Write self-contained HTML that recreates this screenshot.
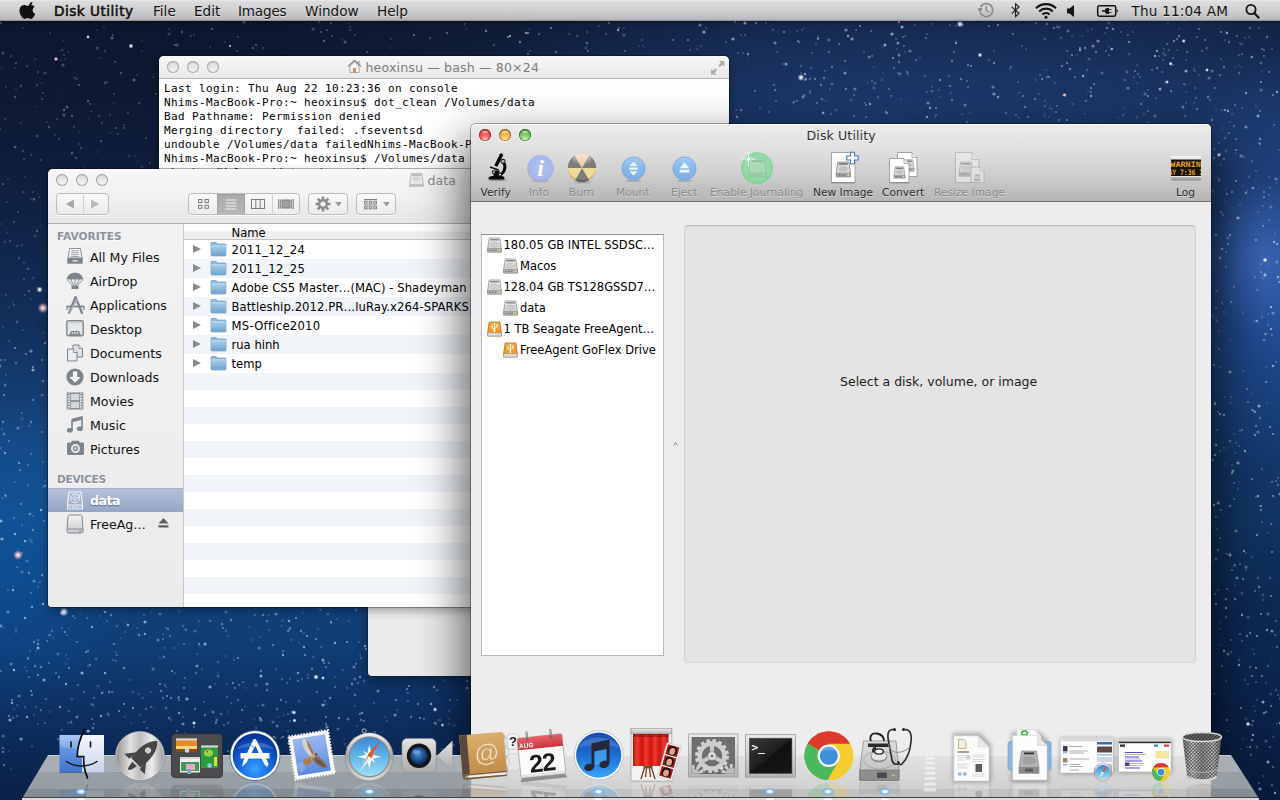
<!DOCTYPE html>
<html lang="en">
<head>
<meta charset="utf-8">
<title>Disk Utility</title>
<style>
*{box-sizing:border-box;margin:0;padding:0}
html,body{width:1280px;height:800px;overflow:hidden;background:#10264f}
body{position:relative;font-family:"DejaVu Sans","Liberation Sans",sans-serif;font-size:12px;color:#000;-webkit-font-smoothing:antialiased}
.abs{position:absolute}
.t{position:absolute;white-space:nowrap;line-height:1}
#bg{position:absolute;left:0;top:0;width:1280px;height:800px;
 background:
  radial-gradient(ellipse 140px 150px at 0px 565px, rgba(6,88,168,.5), rgba(6,88,168,0) 100%),
  radial-gradient(ellipse 60px 80px at 1262px 258px, rgba(90,140,230,.42), rgba(90,140,230,0) 100%),
  radial-gradient(ellipse 150px 260px at 1290px 300px, rgba(45,95,185,.65), rgba(45,95,185,0) 100%),
  radial-gradient(ellipse 700px 260px at 1150px 130px, rgba(34,70,130,.55), rgba(34,70,130,0) 100%),
  radial-gradient(ellipse 520px 110px at 860px 125px, rgba(38,84,156,.42), rgba(38,84,156,0) 100%),
  radial-gradient(ellipse 520px 110px at 760px 50px, rgba(30,60,112,.3), rgba(30,60,112,0) 100%),
  linear-gradient(180deg,#0c152b 0px,#0f1d3b 170px,#12305c 330px,#164a86 450px,#174f8c 520px,#12417a 600px,#0f3d74 650px,#0e3266 700px,#0b2752 760px,#0a2148 800px);
}
/* ---------- menu bar ---------- */
#menubar{position:absolute;left:0;top:0;width:1280px;height:21px;
 background:linear-gradient(180deg,rgba(240,240,240,.97) 0,rgba(228,228,228,.96) 1.500px,rgba(216,216,216,.95) 50%,rgba(196,196,196,.94) 92%,rgba(140,140,140,.95) 100%);
 box-shadow:0 1px 3px rgba(0,0,0,.45);font-size:13.6px;color:#111;z-index:50}
#menubar .t{top:4px;line-height:14px;text-shadow:0 1px 0 rgba(255,255,255,.5)}
/* ---------- generic window ---------- */
.win{position:absolute;border-radius:5px 5px 4px 4px}
.tl{position:absolute;width:12px;height:12px;border-radius:50%}
.tl.off{background:linear-gradient(180deg,#dcdcdc 0,#f4f4f4 100%);box-shadow:inset 0 0 0 1px #a9a9a9,inset 0 1px 2px rgba(0,0,0,.18)}
.tl.r{background:radial-gradient(circle at 50% 88%,#ffc4c4 0,#fb5e5c 38%,#ee403e 62%,#a0242a 100%);box-shadow:inset 0 0 0 .7px rgba(110,20,30,.75),0 1px 0 rgba(255,255,255,.55)}
.tl.y{background:radial-gradient(circle at 50% 88%,#ffeca6 0,#f9b854 38%,#ef9f38 62%,#a0641a 100%);box-shadow:inset 0 0 0 .7px rgba(120,70,10,.75),0 1px 0 rgba(255,255,255,.55)}
.tl.g{background:radial-gradient(circle at 50% 88%,#d8f2b6 0,#88ce74 38%,#62b456 62%,#2f7236 100%);box-shadow:inset 0 0 0 .7px rgba(30,80,30,.75),0 1px 0 rgba(255,255,255,.55)}
.tl:after{content:"";position:absolute;left:3px;top:1.500px;width:6px;height:3px;border-radius:50%;background:linear-gradient(180deg,rgba(255,255,255,.8),rgba(255,255,255,.05))}
.tl.off:after{display:none}

/* ---------- terminal ---------- */
#term{left:159px;top:56px;width:570px;height:362px;background:#fff;box-shadow:0 0 0 1px rgba(0,0,0,.28),0 4px 10px rgba(0,0,0,.32)}
#term .tb{position:absolute;left:0;top:0;width:570px;height:23px;border-radius:5px 5px 0 0;background:linear-gradient(180deg,#f7f7f7 0,#e9e9e9 100%);border-bottom:1px solid #b4b4b4}
#term pre{position:absolute;left:5px;top:25.500px;font-family:"DejaVu Sans Mono","Liberation Mono",monospace;font-size:11px;line-height:14px;letter-spacing:.378px;color:#000}
/* ---------- grey window behind ---------- */
#hidden{left:368px;top:300px;width:420px;height:376px;background:#ebebeb;box-shadow:0 0 0 1px rgba(0,0,0,.25),0 6px 14px rgba(0,0,0,.35)}
/* ---------- finder ---------- */
#finder{left:48px;top:169px;width:640px;height:438px;background:#fff;box-shadow:0 0 0 1px rgba(0,0,0,.3),0 4px 10px rgba(0,0,0,.32);overflow:hidden}
#finder .tb{position:absolute;left:0;top:0;width:100%;height:55px;background:linear-gradient(180deg,#f8f8f8 0,#f1f1f1 50%,#e6e6e6 100%);border-bottom:1px solid #b1b1b1}
.fbtn{position:absolute;top:24px;height:22px;border:1px solid #bdbdbd;border-radius:4px;background:linear-gradient(180deg,#f9f9f9,#ececec);box-shadow:0 1px 0 rgba(255,255,255,.7)}
#side{position:absolute;left:0;top:55px;width:136px;height:383px;background:linear-gradient(180deg,#f2f2f2,#ebebeb);border-right:1px solid #c9c9c9}
#side .h{position:absolute;left:9px;font-size:10.6px;font-weight:bold;color:#8b929c;line-height:12px;text-shadow:0 1px 0 rgba(255,255,255,.8)}
#side .it{position:absolute;left:42px;font-size:12.6px;line-height:16px;white-space:nowrap;color:#111}
#side svg{position:absolute;left:18px}
#side .sel{position:absolute;left:0;top:264px;width:135px;height:24px;background:linear-gradient(180deg,#b5c1d9 0,#94a5c6 100%);border-top:1px solid #a3b1cd}
#list{position:absolute;left:136px;top:55px;width:520px;height:383px;
 background:#fff}
#list .st{position:absolute;left:0;top:149px;width:100%;height:240px;background:repeating-linear-gradient(180deg,#f1f4f9 0,#f1f4f9 17px,#fff 17px,#fff 34px)}
#list .r.alt{background:#f1f4f9}
#list .hd{position:absolute;left:0;top:0;width:100%;height:16px;background:linear-gradient(180deg,#fff 0,#fbfbfb 45%,#ededed 55%,#efefef 100%);border-bottom:1px solid #c2c2c2}
#list .r{position:absolute;left:0;height:19px;width:100%}
#list .r b{position:absolute;left:9px;top:5px;width:0;height:0;border-left:8px solid #8b8b8b;border-top:4.500px solid transparent;border-bottom:4.500px solid transparent}
#list .r svg{position:absolute;left:26px;top:1px}
#list .r span{position:absolute;left:47.500px;top:3px;font-size:11.6px;line-height:15px;white-space:nowrap}
/* ---------- disk utility ---------- */
#du{left:471px;top:124px;width:740px;height:700px;background:#ededed;box-shadow:0 0 0 1px rgba(0,0,0,.32),0 24px 46px 8px rgba(0,0,0,.62)}
#du .tb{position:absolute;left:0;top:0;width:740px;height:78px;border-radius:5px 5px 0 0;background:linear-gradient(180deg,#ebebeb 0,#e2e2e2 22px,#cfcfcf 50px,#b5b5b5 100%);border-bottom:1px solid #6f6f6f;box-shadow:inset 0 1px 0 rgba(255,255,255,.75)}
#du .lb{position:absolute;top:62px;font-size:10.7px;line-height:13px;white-space:nowrap;color:#2c2c2c;text-shadow:0 1px 0 rgba(255,255,255,.45)}
#du .lb.d{color:#8a8a8a}
#dlist{position:absolute;left:10px;top:110px;width:183px;height:422px;background:#fff;border:1px solid #b8b8b8;border-top-color:#8e8e8e}
#dlist span{position:absolute;font-size:11.5px;line-height:15px;white-space:nowrap}
#dlist svg{position:absolute}
#dpane{position:absolute;left:213px;top:101px;width:512px;height:438px;background:#e4e4e4;border:1px solid #d0d0d0;border-top-color:#c2c2c2;border-bottom-color:#d8d8d8;border-radius:4px;box-shadow:inset 0 1px 1px rgba(0,0,0,.06)}
</style>
</head>
<body>
<div id="bg"></div>
<div id="bgr" class="abs" style="left:1150px;top:0;width:130px;height:800px;background:linear-gradient(180deg,rgba(8,18,44,0) 340px,rgba(8,18,44,.42) 470px,rgba(8,18,44,.5) 620px,rgba(8,18,44,.42) 800px)"></div>
<svg id="stars" class="abs" style="left:0;top:0;filter:blur(.6px)" width="1280" height="800" viewBox="0 0 1280 800">
<defs><radialGradient id="sg"><stop offset="0" stop-color="#fff"/><stop offset=".35" stop-color="#fff" stop-opacity=".8"/><stop offset="1" stop-color="#cfe2ff" stop-opacity="0"/></radialGradient><radialGradient id="pg"><stop offset="0" stop-color="#fff"/><stop offset=".3" stop-color="#f6cfd6" stop-opacity=".9"/><stop offset="1" stop-color="#e8a0b8" stop-opacity="0"/></radialGradient></defs>
<g fill="#bfe0f5" fill-opacity="0.18"><circle cx="116" cy="652" r="1.2"/><circle cx="793" cy="103" r="1.2"/><circle cx="804" cy="28" r="0.9"/><circle cx="1156" cy="98" r="1.2"/><circle cx="16" cy="89" r="0.9"/><circle cx="920" cy="58" r="1.2"/><circle cx="9" cy="341" r="1.2"/><circle cx="33" cy="200" r="0.9"/><circle cx="1220" cy="367" r="1.2"/><circle cx="1230" cy="340" r="0.9"/><circle cx="43" cy="395" r="0.9"/><circle cx="1225" cy="32" r="0.9"/><circle cx="951" cy="93" r="1.6"/><circle cx="253" cy="640" r="1.2"/><circle cx="98" cy="686" r="1.6"/><circle cx="1109" cy="47" r="0.9"/><circle cx="1223" cy="128" r="0.9"/><circle cx="99" cy="116" r="1.6"/><circle cx="940" cy="97" r="0.9"/><circle cx="22" cy="245" r="1.2"/><circle cx="1253" cy="649" r="0.9"/><circle cx="254" cy="719" r="0.9"/><circle cx="75" cy="78" r="1.6"/><circle cx="37" cy="288" r="0.9"/><circle cx="1055" cy="83" r="1.2"/><circle cx="419" cy="739" r="0.9"/><circle cx="1246" cy="719" r="1.6"/><circle cx="932" cy="87" r="1.2"/><circle cx="146" cy="138" r="1.2"/><circle cx="154" cy="708" r="0.9"/><circle cx="1199" cy="75" r="1.2"/><circle cx="27" cy="671" r="1.2"/><circle cx="1010" cy="69" r="1.2"/><circle cx="6" cy="375" r="1.2"/><circle cx="1280" cy="699" r="1.2"/><circle cx="449" cy="724" r="1.6"/><circle cx="1280" cy="698" r="1.2"/><circle cx="818" cy="36" r="0.9"/><circle cx="110" cy="115" r="1.2"/><circle cx="140" cy="715" r="1.6"/><circle cx="15" cy="482" r="1.2"/><circle cx="1194" cy="69" r="1.2"/><circle cx="1241" cy="749" r="0.9"/><circle cx="1226" cy="201" r="0.9"/><circle cx="1088" cy="31" r="0.9"/><circle cx="1243" cy="313" r="1.2"/><circle cx="269" cy="753" r="0.9"/><circle cx="185" cy="629" r="0.9"/></g>
<g fill="#dfe8f7" fill-opacity="0.14"><circle cx="6" cy="87" r="1.2"/><circle cx="91" cy="111" r="1.2"/><circle cx="79" cy="132" r="0.9"/><circle cx="42" cy="83" r="0.9"/><circle cx="21" cy="123" r="1.2"/><circle cx="342" cy="39" r="0.9"/><circle cx="41" cy="226" r="0.9"/><circle cx="35" cy="59" r="1.2"/><circle cx="79" cy="144" r="1.2"/><circle cx="5" cy="242" r="1.6"/><circle cx="210" cy="47" r="1.2"/><circle cx="349" cy="23" r="0.9"/><circle cx="8" cy="179" r="1.2"/><circle cx="3" cy="327" r="1.2"/><circle cx="13" cy="303" r="0.9"/><circle cx="350" cy="27" r="1.2"/><circle cx="55" cy="135" r="1.2"/><circle cx="17" cy="246" r="1.6"/><circle cx="43" cy="333" r="1.2"/><circle cx="114" cy="103" r="0.9"/><circle cx="31" cy="199" r="1.2"/></g>
<g fill="#dfe8f7" fill-opacity="0.25"><circle cx="1226" cy="681" r="0.9"/><circle cx="824" cy="112" r="0.9"/><circle cx="166" cy="628" r="0.9"/><circle cx="736" cy="110" r="0.9"/><circle cx="151" cy="692" r="0.9"/><circle cx="1218" cy="412" r="1.2"/><circle cx="1164" cy="49" r="0.9"/><circle cx="183" cy="626" r="1.2"/><circle cx="378" cy="740" r="1.6"/><circle cx="1222" cy="303" r="1.2"/><circle cx="427" cy="745" r="1.6"/><circle cx="1255" cy="277" r="1.2"/><circle cx="3" cy="748" r="1.6"/><circle cx="326" cy="704" r="0.9"/><circle cx="101" cy="616" r="0.9"/><circle cx="226" cy="656" r="0.9"/><circle cx="45" cy="481" r="0.9"/><circle cx="195" cy="631" r="1.6"/><circle cx="932" cy="24" r="0.9"/><circle cx="1" cy="448" r="0.9"/><circle cx="1240" cy="564" r="1.2"/><circle cx="1239" cy="660" r="1.2"/><circle cx="1213" cy="562" r="0.9"/><circle cx="228" cy="636" r="0.9"/><circle cx="185" cy="733" r="0.9"/><circle cx="1186" cy="103" r="0.9"/><circle cx="141" cy="741" r="0.9"/><circle cx="318" cy="629" r="0.9"/><circle cx="216" cy="722" r="1.2"/><circle cx="139" cy="694" r="0.9"/><circle cx="769" cy="112" r="1.2"/><circle cx="599" cy="26" r="0.9"/><circle cx="1225" cy="40" r="0.9"/><circle cx="1251" cy="755" r="1.2"/><circle cx="1026" cy="49" r="0.9"/><circle cx="1231" cy="403" r="0.9"/><circle cx="1127" cy="72" r="1.6"/><circle cx="144" cy="722" r="1.2"/><circle cx="773" cy="30" r="1.2"/><circle cx="42" cy="395" r="1.2"/><circle cx="963" cy="25" r="1.2"/><circle cx="1231" cy="652" r="1.2"/><circle cx="1133" cy="32" r="0.9"/><circle cx="269" cy="630" r="0.9"/><circle cx="905" cy="36" r="0.9"/><circle cx="801" cy="66" r="1.2"/><circle cx="1257" cy="747" r="1.2"/><circle cx="43" cy="462" r="0.9"/><circle cx="1256" cy="106" r="0.9"/><circle cx="1247" cy="747" r="0.9"/><circle cx="1246" cy="553" r="0.9"/><circle cx="130" cy="680" r="0.9"/><circle cx="619" cy="28" r="1.2"/><circle cx="1238" cy="489" r="0.9"/><circle cx="745" cy="35" r="1.2"/><circle cx="1262" cy="469" r="1.2"/><circle cx="335" cy="677" r="0.9"/><circle cx="1251" cy="57" r="0.9"/><circle cx="1246" cy="570" r="0.9"/><circle cx="776" cy="101" r="1.2"/><circle cx="962" cy="114" r="0.9"/><circle cx="1061" cy="38" r="1.2"/><circle cx="907" cy="72" r="1.6"/><circle cx="1194" cy="103" r="0.9"/><circle cx="1270" cy="747" r="1.2"/><circle cx="22" cy="553" r="1.2"/><circle cx="289" cy="630" r="1.2"/><circle cx="1239" cy="73" r="1.2"/><circle cx="28" cy="659" r="1.2"/><circle cx="1248" cy="617" r="1.6"/><circle cx="1140" cy="77" r="0.9"/><circle cx="956" cy="26" r="0.9"/><circle cx="17" cy="716" r="1.2"/><circle cx="1059" cy="27" r="1.6"/><circle cx="856" cy="30" r="1.2"/><circle cx="1045" cy="106" r="1.2"/><circle cx="1228" cy="238" r="1.6"/><circle cx="438" cy="720" r="0.9"/><circle cx="75" cy="618" r="0.9"/><circle cx="1249" cy="37" r="0.9"/><circle cx="165" cy="685" r="1.2"/><circle cx="1252" cy="161" r="1.2"/><circle cx="175" cy="673" r="0.9"/><circle cx="34" cy="715" r="0.9"/><circle cx="1045" cy="101" r="0.9"/><circle cx="1089" cy="59" r="1.6"/><circle cx="783" cy="64" r="0.9"/><circle cx="22" cy="413" r="1.2"/><circle cx="95" cy="738" r="1.6"/><circle cx="50" cy="635" r="1.2"/><circle cx="1257" cy="290" r="1.2"/><circle cx="457" cy="700" r="0.9"/><circle cx="304" cy="633" r="0.9"/><circle cx="172" cy="744" r="1.6"/><circle cx="1226" cy="151" r="1.6"/><circle cx="287" cy="683" r="1.2"/><circle cx="1261" cy="63" r="1.6"/><circle cx="1218" cy="178" r="0.9"/><circle cx="1186" cy="60" r="0.9"/><circle cx="1258" cy="212" r="0.9"/><circle cx="530" cy="51" r="0.9"/><circle cx="239" cy="685" r="1.2"/><circle cx="25" cy="667" r="0.9"/><circle cx="163" cy="634" r="0.9"/><circle cx="1279" cy="150" r="0.9"/><circle cx="878" cy="97" r="1.2"/><circle cx="67" cy="635" r="0.9"/><circle cx="1059" cy="120" r="1.6"/><circle cx="1263" cy="595" r="1.2"/><circle cx="286" cy="702" r="1.2"/><circle cx="1148" cy="122" r="0.9"/><circle cx="494" cy="45" r="1.2"/><circle cx="1138" cy="74" r="1.2"/><circle cx="197" cy="654" r="0.9"/><circle cx="1125" cy="80" r="1.2"/><circle cx="854" cy="116" r="1.2"/><circle cx="1266" cy="741" r="1.6"/><circle cx="1244" cy="157" r="1.2"/><circle cx="1196" cy="98" r="1.2"/><circle cx="93" cy="705" r="1.6"/><circle cx="200" cy="646" r="0.9"/><circle cx="160" cy="658" r="0.9"/><circle cx="305" cy="720" r="0.9"/><circle cx="1249" cy="177" r="1.2"/><circle cx="255" cy="615" r="1.2"/><circle cx="218" cy="676" r="1.6"/><circle cx="760" cy="108" r="0.9"/><circle cx="14" cy="709" r="0.9"/><circle cx="874" cy="88" r="1.6"/><circle cx="28" cy="658" r="1.2"/><circle cx="241" cy="722" r="0.9"/><circle cx="701" cy="46" r="0.9"/></g>
<g fill="#dfe8f7" fill-opacity="0.18"><circle cx="970" cy="113" r="0.9"/><circle cx="43" cy="487" r="0.9"/><circle cx="449" cy="719" r="0.9"/><circle cx="36" cy="651" r="0.9"/><circle cx="249" cy="627" r="0.9"/><circle cx="1241" cy="67" r="0.9"/><circle cx="1225" cy="397" r="0.9"/><circle cx="726" cy="42" r="1.2"/><circle cx="312" cy="747" r="0.9"/><circle cx="245" cy="707" r="0.9"/><circle cx="357" cy="726" r="0.9"/><circle cx="72" cy="699" r="1.6"/><circle cx="440" cy="720" r="1.6"/><circle cx="624" cy="28" r="0.9"/><circle cx="151" cy="612" r="0.9"/><circle cx="1195" cy="88" r="1.2"/><circle cx="825" cy="71" r="1.2"/><circle cx="1219" cy="503" r="1.6"/><circle cx="276" cy="738" r="1.2"/><circle cx="69" cy="628" r="0.9"/><circle cx="23" cy="192" r="1.2"/><circle cx="1239" cy="66" r="0.9"/><circle cx="1019" cy="93" r="1.2"/><circle cx="1269" cy="264" r="0.9"/><circle cx="1243" cy="186" r="0.9"/><circle cx="218" cy="673" r="0.9"/><circle cx="1235" cy="67" r="0.9"/><circle cx="1275" cy="233" r="0.9"/><circle cx="68" cy="659" r="0.9"/><circle cx="826" cy="101" r="0.9"/><circle cx="466" cy="29" r="0.9"/><circle cx="13" cy="586" r="0.9"/><circle cx="1234" cy="566" r="1.2"/><circle cx="142" cy="51" r="0.9"/><circle cx="1267" cy="403" r="0.9"/><circle cx="1221" cy="59" r="1.2"/><circle cx="587" cy="32" r="1.2"/><circle cx="1179" cy="29" r="0.9"/><circle cx="228" cy="712" r="0.9"/><circle cx="1269" cy="220" r="1.2"/><circle cx="1235" cy="585" r="0.9"/><circle cx="9" cy="751" r="0.9"/><circle cx="1263" cy="600" r="1.2"/><circle cx="1129" cy="54" r="1.6"/><circle cx="1242" cy="44" r="1.6"/><circle cx="291" cy="640" r="1.2"/><circle cx="68" cy="723" r="1.2"/><circle cx="345" cy="744" r="1.2"/><circle cx="1262" cy="71" r="0.9"/><circle cx="1085" cy="114" r="0.9"/><circle cx="448" cy="748" r="1.2"/><circle cx="1242" cy="108" r="1.2"/><circle cx="1118" cy="118" r="0.9"/><circle cx="1235" cy="453" r="1.2"/><circle cx="246" cy="688" r="0.9"/><circle cx="1185" cy="85" r="0.9"/><circle cx="1186" cy="92" r="0.9"/><circle cx="72" cy="724" r="0.9"/><circle cx="897" cy="49" r="0.9"/><circle cx="1255" cy="321" r="1.2"/><circle cx="905" cy="52" r="0.9"/><circle cx="1254" cy="706" r="0.9"/><circle cx="109" cy="716" r="0.9"/><circle cx="133" cy="692" r="1.6"/><circle cx="103" cy="692" r="0.9"/><circle cx="1045" cy="116" r="0.9"/><circle cx="278" cy="717" r="0.9"/><circle cx="569" cy="34" r="1.2"/><circle cx="171" cy="720" r="1.2"/><circle cx="802" cy="30" r="1.2"/><circle cx="74" cy="127" r="1.2"/><circle cx="882" cy="80" r="1.6"/><circle cx="387" cy="721" r="1.2"/><circle cx="586" cy="48" r="1.6"/><circle cx="1240" cy="205" r="1.2"/><circle cx="360" cy="655" r="0.9"/><circle cx="1243" cy="739" r="0.9"/><circle cx="1216" cy="318" r="1.2"/><circle cx="463" cy="752" r="1.2"/><circle cx="288" cy="731" r="1.2"/><circle cx="18" cy="549" r="0.9"/><circle cx="1248" cy="684" r="1.2"/><circle cx="9" cy="307" r="0.9"/><circle cx="25" cy="177" r="0.9"/><circle cx="1049" cy="117" r="0.9"/><circle cx="1271" cy="694" r="1.6"/><circle cx="1266" cy="367" r="0.9"/><circle cx="97" cy="30" r="0.9"/><circle cx="153" cy="77" r="0.9"/><circle cx="131" cy="723" r="0.9"/><circle cx="741" cy="35" r="1.2"/><circle cx="874" cy="67" r="0.9"/><circle cx="643" cy="46" r="0.9"/><circle cx="1050" cy="108" r="1.2"/><circle cx="1165" cy="83" r="0.9"/><circle cx="1272" cy="49" r="1.2"/><circle cx="343" cy="670" r="1.2"/><circle cx="68" cy="52" r="0.9"/><circle cx="1137" cy="117" r="1.2"/><circle cx="1261" cy="264" r="1.2"/><circle cx="169" cy="718" r="1.6"/><circle cx="1123" cy="115" r="1.6"/><circle cx="1177" cy="50" r="0.9"/><circle cx="1215" cy="752" r="0.9"/><circle cx="166" cy="687" r="0.9"/><circle cx="444" cy="681" r="1.2"/><circle cx="1247" cy="191" r="0.9"/><circle cx="1220" cy="451" r="1.6"/><circle cx="267" cy="738" r="0.9"/><circle cx="62" cy="50" r="1.6"/><circle cx="956" cy="41" r="0.9"/><circle cx="22" cy="419" r="1.6"/><circle cx="227" cy="684" r="1.2"/><circle cx="284" cy="715" r="0.9"/><circle cx="385" cy="717" r="0.9"/><circle cx="1245" cy="680" r="1.2"/><circle cx="1240" cy="431" r="1.2"/><circle cx="1137" cy="83" r="0.9"/><circle cx="7" cy="233" r="0.9"/><circle cx="830" cy="89" r="1.2"/><circle cx="299" cy="701" r="1.6"/><circle cx="1278" cy="478" r="1.2"/><circle cx="797" cy="31" r="1.2"/><circle cx="165" cy="648" r="1.2"/><circle cx="1088" cy="91" r="0.9"/><circle cx="43" cy="485" r="0.9"/><circle cx="174" cy="648" r="1.2"/><circle cx="303" cy="613" r="0.9"/><circle cx="706" cy="28" r="1.2"/><circle cx="80" cy="613" r="0.9"/><circle cx="1265" cy="273" r="0.9"/><circle cx="28" cy="485" r="1.2"/><circle cx="1092" cy="29" r="1.2"/><circle cx="1019" cy="118" r="1.2"/><circle cx="41" cy="160" r="1.2"/><circle cx="1082" cy="36" r="0.9"/><circle cx="281" cy="626" r="0.9"/><circle cx="234" cy="660" r="1.2"/><circle cx="218" cy="662" r="1.6"/><circle cx="454" cy="725" r="1.6"/><circle cx="63" cy="41" r="0.9"/><circle cx="1045" cy="114" r="0.9"/><circle cx="30" cy="540" r="1.6"/><circle cx="1039" cy="94" r="1.2"/><circle cx="36" cy="707" r="1.2"/><circle cx="1277" cy="183" r="0.9"/><circle cx="260" cy="755" r="1.2"/><circle cx="1216" cy="109" r="0.9"/><circle cx="1046" cy="70" r="0.9"/><circle cx="65" cy="59" r="0.9"/><circle cx="1219" cy="331" r="1.2"/><circle cx="4" cy="628" r="0.9"/><circle cx="1230" cy="553" r="0.9"/><circle cx="16" cy="629" r="1.6"/><circle cx="1213" cy="191" r="1.6"/></g>
<g fill="#dfe8f7" fill-opacity="0.45"><circle cx="77" cy="642" r="0.9"/><circle cx="1260" cy="111" r="0.9"/><circle cx="267" cy="684" r="1.6"/><circle cx="30" cy="514" r="1.2"/><circle cx="1056" cy="112" r="0.9"/><circle cx="1242" cy="54" r="0.9"/><circle cx="954" cy="52" r="0.9"/><circle cx="845" cy="73" r="1.6"/><circle cx="235" cy="688" r="0.9"/><circle cx="1135" cy="71" r="0.9"/><circle cx="321" cy="730" r="0.9"/><circle cx="41" cy="510" r="0.9"/><circle cx="994" cy="94" r="1.6"/><circle cx="1242" cy="430" r="0.9"/><circle cx="1070" cy="69" r="1.2"/><circle cx="73" cy="616" r="0.9"/><circle cx="1085" cy="48" r="1.2"/><circle cx="139" cy="635" r="1.2"/><circle cx="70" cy="751" r="0.9"/><circle cx="866" cy="117" r="0.9"/><circle cx="31" cy="351" r="1.6"/><circle cx="1215" cy="404" r="1.2"/><circle cx="898" cy="43" r="1.6"/><circle cx="1205" cy="40" r="0.9"/><circle cx="829" cy="52" r="0.9"/><circle cx="1229" cy="133" r="0.9"/><circle cx="872" cy="56" r="0.9"/><circle cx="1255" cy="435" r="1.2"/><circle cx="261" cy="720" r="1.6"/><circle cx="124" cy="668" r="1.2"/><circle cx="324" cy="663" r="0.9"/><circle cx="327" cy="727" r="1.6"/><circle cx="1264" cy="713" r="1.2"/><circle cx="20" cy="470" r="0.9"/><circle cx="330" cy="698" r="1.2"/><circle cx="989" cy="26" r="0.9"/><circle cx="1216" cy="517" r="0.9"/><circle cx="735" cy="22" r="0.9"/><circle cx="1264" cy="50" r="0.9"/><circle cx="845" cy="61" r="0.9"/><circle cx="467" cy="681" r="1.2"/><circle cx="1272" cy="335" r="0.9"/><circle cx="1232" cy="473" r="1.2"/><circle cx="1230" cy="506" r="1.2"/><circle cx="298" cy="681" r="0.9"/><circle cx="1235" cy="599" r="1.2"/><circle cx="806" cy="79" r="1.2"/><circle cx="818" cy="39" r="0.9"/><circle cx="1221" cy="510" r="0.9"/><circle cx="805" cy="80" r="0.9"/><circle cx="289" cy="743" r="1.6"/><circle cx="846" cy="30" r="1.6"/><circle cx="326" cy="667" r="0.9"/><circle cx="1259" cy="587" r="1.2"/><circle cx="1257" cy="535" r="1.2"/><circle cx="49" cy="663" r="0.9"/><circle cx="1174" cy="41" r="1.2"/><circle cx="1216" cy="308" r="0.9"/><circle cx="339" cy="718" r="1.2"/><circle cx="486" cy="31" r="1.2"/><circle cx="1086" cy="101" r="0.9"/><circle cx="385" cy="751" r="0.9"/><circle cx="288" cy="631" r="0.9"/><circle cx="41" cy="710" r="0.9"/><circle cx="1129" cy="42" r="1.2"/><circle cx="29" cy="573" r="1.2"/><circle cx="1252" cy="57" r="1.2"/><circle cx="1013" cy="34" r="0.9"/><circle cx="425" cy="743" r="0.9"/><circle cx="395" cy="715" r="1.6"/><circle cx="94" cy="698" r="0.9"/><circle cx="1093" cy="46" r="1.6"/><circle cx="1260" cy="789" r="1.6"/><circle cx="1260" cy="139" r="1.2"/><circle cx="197" cy="666" r="1.6"/><circle cx="311" cy="743" r="0.9"/><circle cx="1236" cy="139" r="0.9"/><circle cx="42" cy="575" r="1.2"/><circle cx="325" cy="701" r="0.9"/><circle cx="1264" cy="192" r="0.9"/><circle cx="1225" cy="110" r="1.2"/><circle cx="994" cy="63" r="1.2"/><circle cx="102" cy="693" r="1.2"/><circle cx="1011" cy="67" r="0.9"/><circle cx="38" cy="644" r="1.2"/><circle cx="1" cy="626" r="1.6"/><circle cx="360" cy="677" r="1.2"/><circle cx="41" cy="510" r="1.2"/><circle cx="1075" cy="77" r="0.9"/><circle cx="940" cy="80" r="1.2"/><circle cx="1222" cy="666" r="0.9"/><circle cx="871" cy="31" r="0.9"/><circle cx="194" cy="727" r="0.9"/><circle cx="133" cy="708" r="1.2"/><circle cx="1221" cy="212" r="0.9"/><circle cx="1237" cy="36" r="0.9"/><circle cx="44" cy="521" r="0.9"/><circle cx="928" cy="103" r="1.6"/><circle cx="1098" cy="41" r="1.6"/><circle cx="737" cy="117" r="1.2"/><circle cx="748" cy="54" r="1.2"/><circle cx="260" cy="718" r="1.2"/><circle cx="798" cy="41" r="0.9"/><circle cx="109" cy="692" r="1.2"/><circle cx="1277" cy="244" r="1.2"/><circle cx="1214" cy="158" r="0.9"/><circle cx="1028" cy="117" r="0.9"/><circle cx="1273" cy="767" r="0.9"/><circle cx="317" cy="692" r="0.9"/><circle cx="362" cy="713" r="1.2"/><circle cx="1271" cy="524" r="0.9"/><circle cx="1113" cy="29" r="1.2"/><circle cx="179" cy="697" r="0.9"/><circle cx="9" cy="441" r="0.9"/><circle cx="348" cy="747" r="1.6"/><circle cx="1216" cy="604" r="1.2"/><circle cx="352" cy="684" r="1.2"/><circle cx="356" cy="664" r="0.9"/><circle cx="1233" cy="471" r="1.6"/><circle cx="1230" cy="235" r="1.2"/><circle cx="520" cy="42" r="1.2"/><circle cx="1246" cy="193" r="1.2"/><circle cx="19" cy="463" r="1.2"/><circle cx="1232" cy="570" r="0.9"/><circle cx="1216" cy="445" r="1.6"/><circle cx="1230" cy="372" r="1.6"/><circle cx="1272" cy="631" r="1.6"/></g>
<g fill="#e9cfe0" fill-opacity="0.25"><circle cx="822" cy="99" r="1.6"/><circle cx="281" cy="738" r="0.9"/><circle cx="1052" cy="109" r="0.9"/><circle cx="1268" cy="314" r="0.9"/><circle cx="1266" cy="334" r="1.6"/><circle cx="269" cy="615" r="0.9"/><circle cx="1226" cy="189" r="0.9"/><circle cx="277" cy="709" r="1.6"/><circle cx="908" cy="74" r="1.2"/><circle cx="1230" cy="122" r="0.9"/><circle cx="1214" cy="149" r="1.2"/><circle cx="337" cy="619" r="0.9"/><circle cx="577" cy="36" r="1.2"/><circle cx="117" cy="626" r="1.2"/><circle cx="452" cy="747" r="1.2"/><circle cx="804" cy="95" r="1.6"/><circle cx="258" cy="706" r="0.9"/><circle cx="1242" cy="593" r="1.6"/><circle cx="1252" cy="557" r="0.9"/><circle cx="38" cy="640" r="1.6"/><circle cx="282" cy="621" r="0.9"/><circle cx="66" cy="655" r="0.9"/><circle cx="1220" cy="629" r="0.9"/><circle cx="215" cy="684" r="0.9"/><circle cx="1228" cy="731" r="0.9"/><circle cx="1236" cy="153" r="0.9"/><circle cx="103" cy="754" r="1.2"/><circle cx="1263" cy="776" r="0.9"/><circle cx="1109" cy="23" r="1.6"/><circle cx="288" cy="714" r="1.2"/><circle cx="1259" cy="783" r="1.2"/><circle cx="74" cy="747" r="0.9"/><circle cx="1165" cy="55" r="1.6"/><circle cx="14" cy="670" r="1.2"/><circle cx="52" cy="631" r="1.6"/><circle cx="354" cy="738" r="1.2"/><circle cx="226" cy="631" r="1.2"/><circle cx="8" cy="590" r="1.2"/><circle cx="88" cy="666" r="0.9"/><circle cx="1207" cy="48" r="1.6"/><circle cx="256" cy="685" r="1.6"/><circle cx="1234" cy="434" r="0.9"/><circle cx="237" cy="745" r="1.6"/><circle cx="151" cy="707" r="1.2"/></g>
<g fill="#e9cfe0" fill-opacity="0.3"><circle cx="331" cy="623" r="0.9"/><circle cx="202" cy="669" r="0.9"/><circle cx="308" cy="675" r="0.9"/><circle cx="58" cy="739" r="1.2"/><circle cx="1177" cy="39" r="1.2"/><circle cx="1137" cy="65" r="0.9"/><circle cx="313" cy="657" r="0.9"/><circle cx="364" cy="681" r="1.2"/><circle cx="166" cy="708" r="1.6"/><circle cx="854" cy="95" r="1.2"/><circle cx="5" cy="360" r="0.9"/><circle cx="935" cy="117" r="0.9"/><circle cx="1252" cy="725" r="1.2"/><circle cx="777" cy="52" r="0.9"/><circle cx="16" cy="632" r="0.9"/><circle cx="898" cy="73" r="0.9"/><circle cx="1273" cy="737" r="0.9"/><circle cx="1217" cy="321" r="1.2"/><circle cx="741" cy="110" r="1.6"/><circle cx="283" cy="651" r="1.2"/><circle cx="1226" cy="617" r="1.2"/><circle cx="539" cy="34" r="1.2"/><circle cx="108" cy="714" r="1.6"/><circle cx="1243" cy="371" r="0.9"/><circle cx="1255" cy="591" r="1.2"/><circle cx="1263" cy="206" r="0.9"/><circle cx="816" cy="44" r="0.9"/><circle cx="1259" cy="28" r="0.9"/><circle cx="915" cy="25" r="0.9"/><circle cx="40" cy="582" r="0.9"/><circle cx="1264" cy="340" r="1.6"/></g>
<g fill="#e9cfe0" fill-opacity="0.18"><circle cx="100" cy="58" r="0.9"/><circle cx="121" cy="638" r="0.9"/><circle cx="1036" cy="80" r="1.2"/><circle cx="321" cy="610" r="0.9"/><circle cx="1268" cy="533" r="0.9"/><circle cx="901" cy="99" r="0.9"/><circle cx="529" cy="29" r="0.9"/><circle cx="179" cy="611" r="1.2"/><circle cx="836" cy="110" r="1.6"/><circle cx="143" cy="698" r="1.6"/><circle cx="18" cy="410" r="0.9"/><circle cx="1077" cy="55" r="0.9"/><circle cx="1269" cy="177" r="1.2"/><circle cx="1266" cy="683" r="1.2"/><circle cx="882" cy="48" r="0.9"/><circle cx="868" cy="83" r="0.9"/><circle cx="22" cy="426" r="0.9"/><circle cx="344" cy="739" r="0.9"/><circle cx="152" cy="740" r="0.9"/><circle cx="1239" cy="482" r="0.9"/><circle cx="1252" cy="394" r="0.9"/><circle cx="864" cy="52" r="1.2"/><circle cx="142" cy="41" r="0.9"/><circle cx="299" cy="643" r="0.9"/><circle cx="883" cy="73" r="0.9"/><circle cx="1240" cy="43" r="1.2"/><circle cx="1272" cy="659" r="0.9"/><circle cx="1125" cy="108" r="0.9"/><circle cx="810" cy="93" r="1.6"/><circle cx="33" cy="516" r="1.2"/><circle cx="11" cy="769" r="0.9"/><circle cx="90" cy="746" r="1.2"/><circle cx="283" cy="620" r="0.9"/><circle cx="1255" cy="711" r="1.2"/><circle cx="1221" cy="165" r="1.2"/><circle cx="639" cy="46" r="0.9"/><circle cx="150" cy="637" r="0.9"/><circle cx="697" cy="49" r="1.2"/><circle cx="690" cy="50" r="1.2"/><circle cx="127" cy="624" r="0.9"/><circle cx="137" cy="628" r="1.2"/><circle cx="57" cy="119" r="1.2"/><circle cx="1221" cy="623" r="0.9"/><circle cx="32" cy="746" r="1.6"/><circle cx="1168" cy="23" r="0.9"/><circle cx="1263" cy="278" r="1.6"/><circle cx="1218" cy="590" r="1.6"/><circle cx="355" cy="706" r="1.2"/><circle cx="748" cy="56" r="0.9"/><circle cx="61" cy="60" r="0.9"/><circle cx="1230" cy="223" r="0.9"/><circle cx="15" cy="68" r="0.9"/><circle cx="1219" cy="244" r="0.9"/><circle cx="216" cy="718" r="0.9"/><circle cx="29" cy="426" r="1.2"/><circle cx="382" cy="732" r="0.9"/><circle cx="1213" cy="316" r="1.2"/><circle cx="110" cy="133" r="0.9"/><circle cx="23" cy="28" r="0.9"/><circle cx="865" cy="103" r="1.2"/></g>
<g fill="#bfe0f5" fill-opacity="0.3"><circle cx="329" cy="663" r="1.2"/><circle cx="273" cy="722" r="1.6"/><circle cx="205" cy="748" r="0.9"/><circle cx="196" cy="673" r="1.2"/><circle cx="338" cy="729" r="1.6"/><circle cx="423" cy="743" r="1.6"/><circle cx="1195" cy="71" r="0.9"/><circle cx="1245" cy="38" r="0.9"/><circle cx="228" cy="723" r="1.2"/><circle cx="17" cy="705" r="0.9"/><circle cx="994" cy="51" r="0.9"/><circle cx="38" cy="724" r="0.9"/><circle cx="1260" cy="506" r="0.9"/><circle cx="766" cy="23" r="0.9"/><circle cx="939" cy="90" r="0.9"/><circle cx="1232" cy="465" r="0.9"/><circle cx="2" cy="429" r="0.9"/><circle cx="1006" cy="113" r="1.2"/><circle cx="927" cy="34" r="0.9"/><circle cx="183" cy="717" r="0.9"/><circle cx="810" cy="79" r="1.2"/><circle cx="1272" cy="482" r="1.2"/><circle cx="216" cy="723" r="1.2"/><circle cx="450" cy="700" r="1.2"/><circle cx="204" cy="702" r="0.9"/><circle cx="1271" cy="207" r="1.6"/><circle cx="1219" cy="349" r="1.2"/><circle cx="78" cy="685" r="1.2"/><circle cx="1215" cy="594" r="1.2"/><circle cx="27" cy="561" r="1.6"/><circle cx="875" cy="83" r="1.2"/><circle cx="1272" cy="785" r="1.2"/><circle cx="1102" cy="73" r="1.6"/></g>
<g fill="#dfe8f7" fill-opacity="0.38"><circle cx="1246" cy="93" r="0.9"/><circle cx="1227" cy="554" r="0.9"/><circle cx="925" cy="76" r="0.9"/><circle cx="42" cy="432" r="0.9"/><circle cx="43" cy="381" r="1.2"/><circle cx="316" cy="639" r="1.2"/><circle cx="1276" cy="179" r="1.6"/><circle cx="31" cy="454" r="0.9"/><circle cx="551" cy="28" r="1.2"/><circle cx="824" cy="78" r="1.2"/><circle cx="169" cy="718" r="0.9"/><circle cx="625" cy="51" r="0.9"/><circle cx="326" cy="724" r="1.2"/><circle cx="910" cy="51" r="1.6"/><circle cx="1234" cy="287" r="0.9"/><circle cx="90" cy="665" r="1.2"/><circle cx="1163" cy="60" r="0.9"/><circle cx="1228" cy="654" r="1.6"/><circle cx="1274" cy="125" r="0.9"/><circle cx="1057" cy="106" r="0.9"/><circle cx="256" cy="728" r="0.9"/><circle cx="1047" cy="24" r="1.2"/><circle cx="869" cy="57" r="1.6"/><circle cx="803" cy="97" r="1.6"/><circle cx="1252" cy="676" r="1.2"/><circle cx="899" cy="62" r="1.2"/><circle cx="231" cy="620" r="1.2"/><circle cx="784" cy="32" r="1.2"/><circle cx="1273" cy="313" r="1.6"/><circle cx="26" cy="354" r="1.2"/><circle cx="1045" cy="39" r="0.9"/><circle cx="361" cy="720" r="1.2"/><circle cx="1253" cy="721" r="1.2"/><circle cx="89" cy="731" r="0.9"/><circle cx="19" cy="696" r="1.6"/><circle cx="1273" cy="95" r="1.2"/><circle cx="1216" cy="559" r="1.2"/><circle cx="1025" cy="107" r="1.2"/><circle cx="1184" cy="84" r="0.9"/><circle cx="110" cy="682" r="0.9"/><circle cx="228" cy="751" r="0.9"/><circle cx="408" cy="693" r="0.9"/><circle cx="35" cy="666" r="1.2"/><circle cx="0" cy="366" r="1.6"/><circle cx="967" cy="81" r="0.9"/><circle cx="916" cy="60" r="0.9"/><circle cx="1183" cy="107" r="1.6"/><circle cx="936" cy="115" r="0.9"/><circle cx="312" cy="669" r="1.2"/><circle cx="376" cy="748" r="0.9"/><circle cx="408" cy="701" r="0.9"/><circle cx="1111" cy="49" r="0.9"/><circle cx="855" cy="89" r="1.6"/><circle cx="903" cy="37" r="0.9"/><circle cx="1264" cy="56" r="0.9"/><circle cx="1185" cy="116" r="0.9"/><circle cx="305" cy="655" r="1.2"/><circle cx="1167" cy="44" r="0.9"/><circle cx="700" cy="25" r="1.6"/><circle cx="184" cy="644" r="0.9"/><circle cx="1226" cy="252" r="0.9"/><circle cx="116" cy="661" r="0.9"/><circle cx="144" cy="755" r="1.2"/><circle cx="11" cy="664" r="1.6"/><circle cx="1213" cy="460" r="1.2"/><circle cx="32" cy="695" r="1.2"/><circle cx="1224" cy="448" r="0.9"/><circle cx="1067" cy="51" r="0.9"/><circle cx="331" cy="622" r="1.2"/><circle cx="949" cy="76" r="0.9"/><circle cx="1224" cy="312" r="0.9"/><circle cx="77" cy="717" r="1.6"/><circle cx="1231" cy="640" r="0.9"/><circle cx="993" cy="87" r="1.6"/><circle cx="1270" cy="427" r="1.2"/><circle cx="222" cy="624" r="1.2"/><circle cx="34" cy="581" r="1.6"/><circle cx="69" cy="711" r="0.9"/><circle cx="1217" cy="430" r="0.9"/><circle cx="887" cy="113" r="1.2"/><circle cx="418" cy="704" r="1.2"/><circle cx="84" cy="692" r="0.9"/><circle cx="1091" cy="92" r="0.9"/><circle cx="1267" cy="37" r="1.2"/><circle cx="1210" cy="100" r="0.9"/><circle cx="4" cy="765" r="1.2"/><circle cx="282" cy="679" r="0.9"/><circle cx="1253" cy="188" r="1.6"/><circle cx="3" cy="422" r="1.2"/><circle cx="290" cy="721" r="0.9"/><circle cx="1254" cy="411" r="1.2"/><circle cx="8" cy="612" r="1.6"/><circle cx="1219" cy="143" r="0.9"/><circle cx="1036" cy="23" r="0.9"/><circle cx="967" cy="122" r="0.9"/><circle cx="1276" cy="621" r="0.9"/><circle cx="1226" cy="267" r="0.9"/><circle cx="31" cy="422" r="1.2"/><circle cx="1241" cy="708" r="1.2"/><circle cx="1152" cy="70" r="0.9"/><circle cx="1265" cy="334" r="0.9"/><circle cx="1042" cy="79" r="1.2"/><circle cx="326" cy="717" r="1.2"/><circle cx="756" cy="23" r="1.2"/><circle cx="355" cy="695" r="1.2"/><circle cx="961" cy="79" r="1.2"/><circle cx="4" cy="434" r="1.2"/><circle cx="407" cy="689" r="1.2"/><circle cx="163" cy="639" r="0.9"/><circle cx="1223" cy="215" r="0.9"/><circle cx="47" cy="641" r="0.9"/><circle cx="989" cy="60" r="0.9"/><circle cx="936" cy="108" r="1.2"/><circle cx="9" cy="716" r="1.2"/><circle cx="147" cy="728" r="0.9"/><circle cx="1128" cy="88" r="1.6"/><circle cx="1220" cy="258" r="1.6"/><circle cx="1202" cy="51" r="0.9"/><circle cx="88" cy="651" r="1.2"/></g>
<g fill="#bfe0f5" fill-opacity="0.38"><circle cx="1271" cy="706" r="1.2"/><circle cx="435" cy="723" r="1.6"/><circle cx="171" cy="698" r="1.2"/><circle cx="1256" cy="497" r="0.9"/><circle cx="1162" cy="72" r="0.9"/><circle cx="1229" cy="42" r="1.2"/><circle cx="587" cy="43" r="1.2"/><circle cx="1278" cy="695" r="0.9"/><circle cx="1277" cy="262" r="1.6"/><circle cx="811" cy="68" r="0.9"/><circle cx="1096" cy="52" r="1.2"/><circle cx="1173" cy="58" r="0.9"/><circle cx="357" cy="753" r="0.9"/><circle cx="18" cy="428" r="1.6"/><circle cx="891" cy="96" r="0.9"/><circle cx="158" cy="640" r="1.6"/><circle cx="213" cy="712" r="1.6"/><circle cx="1246" cy="567" r="1.6"/><circle cx="22" cy="525" r="0.9"/><circle cx="1218" cy="550" r="1.2"/><circle cx="1270" cy="578" r="0.9"/><circle cx="1035" cy="99" r="1.2"/><circle cx="1217" cy="291" r="0.9"/><circle cx="952" cy="100" r="1.2"/><circle cx="1087" cy="70" r="0.9"/><circle cx="1242" cy="641" r="0.9"/><circle cx="164" cy="657" r="1.2"/><circle cx="107" cy="621" r="0.9"/></g>
<g fill="#e9cfe0" fill-opacity="0.35"><circle cx="112" cy="38" r="1.6"/><circle cx="90" cy="104" r="0.9"/><circle cx="14" cy="222" r="0.9"/><circle cx="24" cy="279" r="0.9"/><circle cx="88" cy="101" r="1.2"/><circle cx="34" cy="199" r="1.2"/><circle cx="10" cy="241" r="0.9"/><circle cx="35" cy="236" r="0.9"/></g>
<g fill="#dfe8f7" fill-opacity="0.35"><circle cx="327" cy="30" r="0.9"/><circle cx="19" cy="258" r="0.9"/><circle cx="1" cy="23" r="0.9"/><circle cx="139" cy="103" r="0.9"/><circle cx="29" cy="291" r="0.9"/><circle cx="16" cy="63" r="0.9"/><circle cx="115" cy="62" r="0.9"/><circle cx="414" cy="35" r="1.2"/><circle cx="321" cy="32" r="0.9"/><circle cx="134" cy="80" r="1.6"/><circle cx="324" cy="41" r="1.2"/><circle cx="319" cy="22" r="0.9"/><circle cx="15" cy="147" r="1.2"/><circle cx="331" cy="23" r="0.9"/><circle cx="367" cy="52" r="0.9"/><circle cx="72" cy="153" r="1.2"/><circle cx="116" cy="128" r="0.9"/><circle cx="64" cy="110" r="1.2"/><circle cx="76" cy="158" r="0.9"/></g>
<g fill="#bfe0f5" fill-opacity="0.45"><circle cx="290" cy="628" r="1.2"/><circle cx="1215" cy="88" r="0.9"/><circle cx="29" cy="677" r="0.9"/><circle cx="1257" cy="636" r="1.2"/><circle cx="1246" cy="127" r="1.6"/><circle cx="93" cy="728" r="1.2"/><circle cx="183" cy="724" r="1.6"/><circle cx="1197" cy="37" r="0.9"/><circle cx="41" cy="667" r="1.2"/><circle cx="243" cy="682" r="0.9"/><circle cx="1227" cy="589" r="0.9"/><circle cx="263" cy="615" r="1.2"/><circle cx="132" cy="740" r="0.9"/><circle cx="1247" cy="636" r="1.2"/><circle cx="1246" cy="93" r="1.2"/><circle cx="846" cy="89" r="1.2"/><circle cx="301" cy="631" r="1.2"/><circle cx="755" cy="91" r="0.9"/><circle cx="1224" cy="67" r="1.2"/><circle cx="111" cy="615" r="1.2"/><circle cx="87" cy="618" r="0.9"/><circle cx="904" cy="46" r="0.9"/><circle cx="1208" cy="97" r="1.2"/><circle cx="56" cy="673" r="0.9"/><circle cx="14" cy="518" r="0.9"/><circle cx="1148" cy="111" r="0.9"/><circle cx="276" cy="614" r="1.6"/><circle cx="307" cy="636" r="1.2"/><circle cx="1262" cy="49" r="0.9"/><circle cx="1220" cy="538" r="0.9"/><circle cx="1199" cy="29" r="0.9"/><circle cx="1187" cy="52" r="0.9"/><circle cx="178" cy="698" r="0.9"/><circle cx="13" cy="718" r="0.9"/><circle cx="1252" cy="740" r="1.2"/><circle cx="1280" cy="494" r="1.6"/><circle cx="59" cy="677" r="1.2"/><circle cx="1225" cy="138" r="0.9"/><circle cx="1237" cy="578" r="1.6"/><circle cx="5" cy="495" r="0.9"/><circle cx="261" cy="671" r="1.2"/><circle cx="774" cy="85" r="0.9"/><circle cx="437" cy="690" r="0.9"/><circle cx="1" cy="671" r="0.9"/><circle cx="92" cy="719" r="0.9"/><circle cx="899" cy="55" r="1.6"/></g>
<g fill="#e9cfe0" fill-opacity="0.6"><circle cx="1160" cy="89" r="1.6"/><circle cx="1280" cy="723" r="1.2"/><circle cx="1238" cy="463" r="1.6"/><circle cx="33" cy="530" r="0.9"/><circle cx="360" cy="714" r="0.9"/><circle cx="1271" cy="596" r="0.9"/><circle cx="688" cy="40" r="0.9"/><circle cx="1230" cy="555" r="1.6"/><circle cx="1094" cy="84" r="0.9"/><circle cx="745" cy="23" r="1.6"/><circle cx="1072" cy="55" r="0.9"/><circle cx="1261" cy="614" r="0.9"/><circle cx="5" cy="453" r="1.2"/><circle cx="1157" cy="68" r="0.9"/><circle cx="6" cy="496" r="0.9"/><circle cx="1267" cy="630" r="1.2"/><circle cx="1235" cy="565" r="0.9"/><circle cx="1224" cy="159" r="0.9"/><circle cx="1141" cy="104" r="0.9"/><circle cx="860" cy="26" r="0.9"/><circle cx="2" cy="539" r="1.6"/><circle cx="526" cy="33" r="1.2"/><circle cx="1214" cy="365" r="0.9"/><circle cx="1257" cy="321" r="1.2"/><circle cx="1226" cy="608" r="1.2"/><circle cx="145" cy="634" r="1.2"/><circle cx="1171" cy="91" r="0.9"/><circle cx="852" cy="39" r="1.6"/><circle cx="733" cy="39" r="1.6"/><circle cx="189" cy="748" r="1.6"/><circle cx="1273" cy="434" r="0.9"/><circle cx="1091" cy="88" r="0.9"/><circle cx="956" cy="43" r="1.2"/><circle cx="1091" cy="96" r="1.2"/><circle cx="160" cy="684" r="0.9"/><circle cx="86" cy="652" r="0.9"/><circle cx="105" cy="612" r="1.2"/><circle cx="1224" cy="415" r="1.2"/><circle cx="60" cy="707" r="1.2"/><circle cx="899" cy="22" r="1.2"/></g>
<g fill="#dfe8f7" fill-opacity="0.6"><circle cx="1250" cy="747" r="0.9"/><circle cx="261" cy="676" r="1.6"/><circle cx="145" cy="622" r="1.6"/><circle cx="528" cy="33" r="0.9"/><circle cx="254" cy="748" r="1.6"/><circle cx="186" cy="749" r="0.9"/><circle cx="88" cy="731" r="1.6"/><circle cx="1214" cy="505" r="1.2"/><circle cx="618" cy="30" r="1.2"/><circle cx="1273" cy="366" r="1.2"/><circle cx="1232" cy="192" r="0.9"/><circle cx="13" cy="590" r="1.2"/><circle cx="396" cy="700" r="0.9"/><circle cx="187" cy="699" r="1.6"/><circle cx="1253" cy="735" r="1.2"/><circle cx="1261" cy="506" r="0.9"/><circle cx="1263" cy="702" r="1.6"/><circle cx="1250" cy="633" r="0.9"/><circle cx="289" cy="621" r="1.2"/><circle cx="971" cy="66" r="0.9"/><circle cx="15" cy="534" r="1.2"/><circle cx="205" cy="644" r="1.6"/><circle cx="45" cy="343" r="0.9"/><circle cx="1256" cy="240" r="0.9"/><circle cx="304" cy="647" r="1.2"/><circle cx="420" cy="718" r="0.9"/><circle cx="1268" cy="762" r="1.6"/><circle cx="1243" cy="579" r="0.9"/><circle cx="34" cy="642" r="0.9"/><circle cx="242" cy="710" r="0.9"/><circle cx="105" cy="673" r="1.2"/><circle cx="1227" cy="33" r="1.2"/><circle cx="27" cy="717" r="1.2"/><circle cx="1215" cy="455" r="1.2"/><circle cx="1242" cy="615" r="1.2"/><circle cx="33" cy="370" r="1.6"/><circle cx="161" cy="691" r="0.9"/><circle cx="238" cy="658" r="0.9"/><circle cx="1062" cy="66" r="0.9"/><circle cx="128" cy="625" r="1.2"/><circle cx="3" cy="752" r="0.9"/><circle cx="1277" cy="92" r="1.2"/><circle cx="150" cy="755" r="0.9"/><circle cx="1275" cy="793" r="1.2"/><circle cx="1236" cy="181" r="0.9"/><circle cx="1228" cy="111" r="1.2"/><circle cx="310" cy="740" r="0.9"/><circle cx="805" cy="74" r="1.2"/><circle cx="1239" cy="665" r="1.2"/><circle cx="1271" cy="307" r="1.2"/><circle cx="409" cy="686" r="0.9"/><circle cx="1262" cy="676" r="0.9"/><circle cx="704" cy="32" r="1.6"/><circle cx="25" cy="541" r="1.2"/><circle cx="119" cy="711" r="0.9"/><circle cx="167" cy="696" r="0.9"/><circle cx="1083" cy="76" r="1.2"/><circle cx="335" cy="643" r="1.2"/><circle cx="1230" cy="441" r="0.9"/><circle cx="323" cy="705" r="1.6"/><circle cx="927" cy="117" r="1.2"/><circle cx="210" cy="687" r="1.6"/><circle cx="1" cy="521" r="1.6"/><circle cx="1186" cy="71" r="1.6"/><circle cx="65" cy="632" r="0.9"/><circle cx="1224" cy="651" r="1.2"/><circle cx="1266" cy="382" r="0.9"/><circle cx="902" cy="27" r="1.6"/><circle cx="82" cy="673" r="1.6"/><circle cx="92" cy="627" r="1.2"/><circle cx="283" cy="655" r="1.2"/><circle cx="14" cy="670" r="1.2"/><circle cx="1080" cy="48" r="0.9"/><circle cx="1148" cy="96" r="0.9"/><circle cx="892" cy="34" r="1.6"/><circle cx="870" cy="104" r="1.2"/><circle cx="1245" cy="451" r="1.2"/><circle cx="325" cy="747" r="0.9"/><circle cx="821" cy="85" r="0.9"/><circle cx="33" cy="367" r="0.9"/><circle cx="1080" cy="50" r="1.2"/><circle cx="69" cy="668" r="0.9"/><circle cx="1278" cy="277" r="1.2"/><circle cx="508" cy="37" r="0.9"/><circle cx="195" cy="709" r="0.9"/><circle cx="38" cy="675" r="0.9"/><circle cx="43" cy="604" r="1.2"/><circle cx="10" cy="720" r="1.6"/><circle cx="1252" cy="410" r="0.9"/><circle cx="848" cy="36" r="1.2"/><circle cx="31" cy="691" r="0.9"/><circle cx="1228" cy="244" r="0.9"/><circle cx="930" cy="108" r="1.2"/><circle cx="66" cy="684" r="1.2"/><circle cx="233" cy="683" r="0.9"/><circle cx="1227" cy="194" r="0.9"/><circle cx="1279" cy="282" r="0.9"/><circle cx="124" cy="704" r="0.9"/><circle cx="823" cy="113" r="1.2"/><circle cx="296" cy="618" r="0.9"/><circle cx="172" cy="671" r="0.9"/><circle cx="1112" cy="49" r="1.2"/><circle cx="77" cy="739" r="1.2"/><circle cx="1258" cy="496" r="1.2"/><circle cx="12" cy="703" r="1.2"/><circle cx="431" cy="704" r="1.2"/><circle cx="366" cy="649" r="0.9"/><circle cx="365" cy="646" r="1.2"/><circle cx="893" cy="58" r="0.9"/><circle cx="1155" cy="56" r="1.2"/><circle cx="1274" cy="242" r="1.2"/><circle cx="1259" cy="406" r="1.6"/><circle cx="1238" cy="218" r="1.6"/><circle cx="1221" cy="32" r="0.9"/><circle cx="62" cy="613" r="1.6"/><circle cx="38" cy="648" r="1.6"/><circle cx="510" cy="36" r="1.2"/><circle cx="25" cy="618" r="1.2"/><circle cx="1067" cy="120" r="0.9"/><circle cx="998" cy="25" r="0.9"/><circle cx="1236" cy="150" r="0.9"/><circle cx="885" cy="45" r="1.6"/><circle cx="1226" cy="599" r="0.9"/><circle cx="1220" cy="414" r="1.2"/><circle cx="199" cy="644" r="0.9"/><circle cx="1265" cy="275" r="1.6"/><circle cx="101" cy="716" r="1.2"/></g>
<g fill="#e9cfe0" fill-opacity="0.45"><circle cx="775" cy="43" r="1.6"/><circle cx="223" cy="628" r="0.9"/><circle cx="45" cy="486" r="1.2"/><circle cx="817" cy="103" r="0.9"/><circle cx="378" cy="691" r="1.6"/><circle cx="1216" cy="235" r="1.2"/><circle cx="1241" cy="156" r="1.6"/><circle cx="673" cy="40" r="0.9"/><circle cx="1128" cy="35" r="0.9"/><circle cx="1273" cy="496" r="1.2"/><circle cx="797" cy="101" r="0.9"/><circle cx="839" cy="44" r="0.9"/><circle cx="889" cy="89" r="0.9"/><circle cx="185" cy="678" r="0.9"/><circle cx="1234" cy="483" r="0.9"/><circle cx="224" cy="725" r="0.9"/><circle cx="117" cy="655" r="0.9"/><circle cx="46" cy="699" r="0.9"/><circle cx="1063" cy="95" r="0.9"/><circle cx="588" cy="51" r="0.9"/><circle cx="1278" cy="485" r="0.9"/><circle cx="1215" cy="403" r="1.2"/><circle cx="177" cy="731" r="0.9"/><circle cx="369" cy="745" r="0.9"/><circle cx="1106" cy="51" r="0.9"/><circle cx="952" cy="61" r="1.2"/><circle cx="1256" cy="668" r="1.2"/><circle cx="1248" cy="402" r="0.9"/><circle cx="1234" cy="126" r="0.9"/><circle cx="1275" cy="635" r="0.9"/><circle cx="1259" cy="143" r="0.9"/><circle cx="146" cy="709" r="0.9"/><circle cx="1218" cy="503" r="1.6"/><circle cx="1179" cy="36" r="1.2"/><circle cx="467" cy="688" r="1.6"/><circle cx="866" cy="105" r="0.9"/><circle cx="411" cy="717" r="1.2"/><circle cx="1235" cy="105" r="0.9"/><circle cx="968" cy="87" r="0.9"/></g>
<g fill="#dfe8f7" fill-opacity="0.28"><circle cx="156" cy="94" r="0.9"/><circle cx="18" cy="212" r="0.9"/><circle cx="31" cy="155" r="0.9"/><circle cx="49" cy="127" r="1.2"/><circle cx="237" cy="51" r="0.9"/><circle cx="150" cy="163" r="0.9"/><circle cx="43" cy="93" r="0.9"/><circle cx="121" cy="73" r="1.2"/><circle cx="128" cy="113" r="0.9"/><circle cx="253" cy="48" r="1.2"/><circle cx="244" cy="22" r="1.6"/><circle cx="64" cy="115" r="1.6"/><circle cx="5" cy="119" r="0.9"/><circle cx="67" cy="107" r="1.6"/><circle cx="3" cy="184" r="1.2"/><circle cx="79" cy="85" r="1.2"/><circle cx="37" cy="231" r="1.2"/><circle cx="256" cy="45" r="1.2"/><circle cx="105" cy="51" r="0.9"/><circle cx="191" cy="36" r="0.9"/><circle cx="107" cy="82" r="0.9"/><circle cx="72" cy="116" r="1.2"/><circle cx="263" cy="48" r="0.9"/><circle cx="64" cy="55" r="0.9"/><circle cx="63" cy="65" r="1.6"/><circle cx="28" cy="269" r="1.2"/><circle cx="350" cy="30" r="0.9"/><circle cx="212" cy="29" r="1.2"/><circle cx="465" cy="24" r="0.9"/><circle cx="355" cy="35" r="0.9"/><circle cx="15" cy="97" r="1.2"/><circle cx="124" cy="128" r="0.9"/><circle cx="182" cy="32" r="1.2"/><circle cx="17" cy="322" r="1.2"/><circle cx="177" cy="45" r="1.6"/><circle cx="345" cy="42" r="1.6"/><circle cx="332" cy="36" r="0.9"/><circle cx="238" cy="37" r="0.9"/></g>
<g fill="#dfe8f7" fill-opacity="0.3"><circle cx="1023" cy="96" r="1.2"/><circle cx="226" cy="612" r="1.6"/><circle cx="321" cy="647" r="0.9"/><circle cx="113" cy="660" r="0.9"/><circle cx="896" cy="39" r="0.9"/><circle cx="1134" cy="77" r="0.9"/><circle cx="1219" cy="180" r="1.6"/><circle cx="1040" cy="75" r="0.9"/><circle cx="743" cy="53" r="0.9"/><circle cx="1148" cy="90" r="0.9"/><circle cx="221" cy="714" r="1.2"/><circle cx="263" cy="705" r="1.6"/><circle cx="64" cy="610" r="1.2"/><circle cx="1240" cy="634" r="1.2"/><circle cx="1277" cy="647" r="1.2"/><circle cx="1163" cy="53" r="0.9"/><circle cx="1227" cy="720" r="1.2"/><circle cx="5" cy="385" r="1.6"/><circle cx="3" cy="736" r="1.6"/><circle cx="25" cy="707" r="0.9"/><circle cx="144" cy="615" r="0.9"/><circle cx="348" cy="719" r="1.6"/><circle cx="1256" cy="171" r="0.9"/><circle cx="829" cy="40" r="1.6"/><circle cx="33" cy="400" r="1.2"/><circle cx="927" cy="92" r="0.9"/><circle cx="738" cy="53" r="0.9"/><circle cx="3" cy="498" r="0.9"/><circle cx="900" cy="74" r="1.6"/><circle cx="1220" cy="75" r="1.2"/><circle cx="112" cy="692" r="1.2"/><circle cx="358" cy="683" r="1.2"/><circle cx="624" cy="35" r="1.6"/><circle cx="170" cy="636" r="1.2"/><circle cx="1068" cy="31" r="1.6"/><circle cx="326" cy="748" r="1.6"/><circle cx="1276" cy="362" r="0.9"/><circle cx="49" cy="635" r="0.9"/><circle cx="1250" cy="667" r="1.2"/><circle cx="290" cy="679" r="0.9"/><circle cx="1214" cy="694" r="0.9"/><circle cx="1254" cy="654" r="0.9"/><circle cx="1222" cy="110" r="0.9"/><circle cx="1121" cy="32" r="0.9"/><circle cx="32" cy="542" r="0.9"/><circle cx="153" cy="669" r="1.6"/><circle cx="96" cy="659" r="1.2"/><circle cx="436" cy="724" r="0.9"/><circle cx="1250" cy="28" r="1.2"/><circle cx="1018" cy="82" r="0.9"/><circle cx="1239" cy="446" r="0.9"/><circle cx="799" cy="42" r="1.2"/><circle cx="1261" cy="272" r="1.2"/><circle cx="528" cy="54" r="1.2"/><circle cx="38" cy="587" r="0.9"/><circle cx="832" cy="84" r="1.2"/><circle cx="1173" cy="65" r="0.9"/><circle cx="62" cy="628" r="0.9"/><circle cx="1270" cy="188" r="0.9"/><circle cx="302" cy="679" r="0.9"/><circle cx="22" cy="572" r="1.6"/><circle cx="1144" cy="114" r="0.9"/><circle cx="179" cy="700" r="1.2"/><circle cx="1109" cy="55" r="0.9"/><circle cx="642" cy="40" r="0.9"/><circle cx="926" cy="38" r="1.2"/><circle cx="1261" cy="90" r="1.6"/><circle cx="186" cy="630" r="1.2"/><circle cx="160" cy="614" r="1.6"/><circle cx="276" cy="669" r="0.9"/><circle cx="292" cy="712" r="1.6"/><circle cx="361" cy="658" r="1.2"/><circle cx="1277" cy="724" r="0.9"/><circle cx="1022" cy="46" r="0.9"/><circle cx="359" cy="642" r="0.9"/><circle cx="217" cy="720" r="1.2"/><circle cx="42" cy="360" r="1.2"/><circle cx="932" cy="91" r="1.2"/><circle cx="1258" cy="432" r="1.6"/><circle cx="1247" cy="389" r="1.2"/><circle cx="1217" cy="529" r="0.9"/><circle cx="1232" cy="114" r="0.9"/><circle cx="1197" cy="109" r="1.2"/><circle cx="347" cy="688" r="0.9"/><circle cx="199" cy="621" r="0.9"/><circle cx="1269" cy="195" r="0.9"/><circle cx="950" cy="25" r="0.9"/><circle cx="424" cy="719" r="1.2"/><circle cx="609" cy="23" r="1.2"/><circle cx="1236" cy="443" r="0.9"/><circle cx="30" cy="651" r="0.9"/><circle cx="1262" cy="522" r="0.9"/><circle cx="1212" cy="71" r="1.6"/><circle cx="1234" cy="499" r="1.2"/><circle cx="1239" cy="55" r="0.9"/><circle cx="374" cy="703" r="0.9"/><circle cx="16" cy="363" r="1.2"/><circle cx="335" cy="687" r="1.2"/><circle cx="1231" cy="397" r="0.9"/><circle cx="1159" cy="56" r="0.9"/><circle cx="58" cy="654" r="1.6"/><circle cx="1145" cy="94" r="1.6"/><circle cx="1261" cy="510" r="1.2"/><circle cx="1268" cy="325" r="0.9"/><circle cx="91" cy="704" r="0.9"/><circle cx="1047" cy="77" r="1.2"/><circle cx="210" cy="621" r="1.2"/><circle cx="442" cy="749" r="0.9"/><circle cx="1" cy="360" r="1.2"/><circle cx="1155" cy="116" r="1.6"/><circle cx="231" cy="703" r="0.9"/><circle cx="163" cy="698" r="1.2"/><circle cx="1268" cy="614" r="1.6"/><circle cx="308" cy="678" r="0.9"/><circle cx="355" cy="679" r="1.6"/><circle cx="238" cy="700" r="1.2"/></g>
<g fill="#e9cfe0" fill-opacity="0.38"><circle cx="872" cy="81" r="0.9"/><circle cx="812" cy="53" r="0.9"/><circle cx="1209" cy="78" r="1.6"/><circle cx="810" cy="91" r="0.9"/><circle cx="354" cy="667" r="1.6"/><circle cx="965" cy="105" r="1.6"/><circle cx="606" cy="34" r="0.9"/><circle cx="419" cy="740" r="1.2"/><circle cx="71" cy="722" r="1.2"/><circle cx="1016" cy="115" r="0.9"/><circle cx="831" cy="114" r="0.9"/><circle cx="886" cy="112" r="1.2"/><circle cx="1262" cy="317" r="0.9"/><circle cx="45" cy="723" r="0.9"/><circle cx="245" cy="740" r="1.2"/><circle cx="277" cy="726" r="1.6"/><circle cx="775" cy="90" r="1.2"/><circle cx="267" cy="690" r="1.2"/><circle cx="1169" cy="50" r="0.9"/><circle cx="375" cy="732" r="0.9"/><circle cx="1276" cy="481" r="0.9"/><circle cx="273" cy="645" r="1.2"/><circle cx="205" cy="715" r="1.2"/><circle cx="1256" cy="682" r="0.9"/><circle cx="281" cy="700" r="1.2"/><circle cx="1236" cy="531" r="1.6"/><circle cx="227" cy="697" r="0.9"/><circle cx="12" cy="700" r="1.2"/><circle cx="1107" cy="28" r="1.2"/><circle cx="259" cy="648" r="1.6"/><circle cx="1260" cy="418" r="1.2"/><circle cx="31" cy="593" r="0.9"/><circle cx="21" cy="504" r="1.2"/><circle cx="17" cy="567" r="0.9"/><circle cx="28" cy="465" r="0.9"/></g>
<g fill="#bfe0f5" fill-opacity="0.25"><circle cx="356" cy="610" r="1.6"/><circle cx="818" cy="38" r="1.6"/><circle cx="125" cy="632" r="0.9"/><circle cx="1257" cy="700" r="0.9"/><circle cx="66" cy="664" r="0.9"/><circle cx="1057" cy="27" r="1.2"/><circle cx="801" cy="73" r="0.9"/><circle cx="328" cy="614" r="1.6"/><circle cx="94" cy="724" r="1.2"/><circle cx="894" cy="68" r="1.2"/><circle cx="265" cy="746" r="1.2"/><circle cx="320" cy="610" r="0.9"/><circle cx="62" cy="730" r="1.2"/><circle cx="125" cy="717" r="0.9"/><circle cx="1073" cy="104" r="0.9"/><circle cx="1072" cy="36" r="0.9"/><circle cx="1225" cy="464" r="0.9"/><circle cx="1268" cy="666" r="1.2"/><circle cx="1258" cy="578" r="1.2"/><circle cx="349" cy="621" r="0.9"/><circle cx="63" cy="752" r="1.2"/><circle cx="449" cy="711" r="1.2"/><circle cx="50" cy="712" r="0.9"/><circle cx="1276" cy="690" r="1.2"/><circle cx="53" cy="638" r="0.9"/><circle cx="1105" cy="33" r="0.9"/><circle cx="454" cy="745" r="1.2"/><circle cx="260" cy="637" r="0.9"/><circle cx="1221" cy="645" r="0.9"/><circle cx="397" cy="710" r="0.9"/><circle cx="851" cy="100" r="1.2"/></g>
<g fill="#bfe0f5" fill-opacity="0.6"><circle cx="1054" cy="28" r="0.9"/><circle cx="1244" cy="551" r="1.2"/><circle cx="832" cy="67" r="0.9"/><circle cx="1222" cy="249" r="1.2"/><circle cx="1271" cy="329" r="1.2"/><circle cx="950" cy="86" r="0.9"/><circle cx="114" cy="644" r="0.9"/><circle cx="283" cy="737" r="0.9"/><circle cx="21" cy="739" r="1.6"/><circle cx="4" cy="395" r="0.9"/><circle cx="1269" cy="72" r="0.9"/><circle cx="32" cy="607" r="1.2"/><circle cx="168" cy="629" r="0.9"/><circle cx="1263" cy="226" r="0.9"/><circle cx="15" cy="348" r="0.9"/><circle cx="1049" cy="77" r="0.9"/><circle cx="434" cy="687" r="1.2"/><circle cx="133" cy="752" r="0.9"/><circle cx="298" cy="673" r="1.2"/><circle cx="815" cy="79" r="0.9"/><circle cx="1272" cy="552" r="0.9"/><circle cx="1255" cy="412" r="0.9"/><circle cx="786" cy="64" r="1.6"/><circle cx="364" cy="721" r="0.9"/><circle cx="794" cy="102" r="0.9"/><circle cx="968" cy="65" r="0.9"/><circle cx="1231" cy="302" r="0.9"/><circle cx="267" cy="621" r="0.9"/><circle cx="1261" cy="82" r="0.9"/><circle cx="1067" cy="63" r="0.9"/><circle cx="44" cy="680" r="1.6"/><circle cx="998" cy="97" r="1.2"/><circle cx="1256" cy="426" r="0.9"/><circle cx="1212" cy="120" r="0.9"/><circle cx="1264" cy="197" r="0.9"/><circle cx="347" cy="642" r="0.9"/><circle cx="1157" cy="51" r="1.2"/><circle cx="274" cy="737" r="0.9"/><circle cx="184" cy="688" r="0.9"/><circle cx="1260" cy="144" r="0.9"/><circle cx="1266" cy="712" r="0.9"/><circle cx="1258" cy="116" r="1.6"/><circle cx="179" cy="713" r="1.2"/><circle cx="412" cy="753" r="1.2"/><circle cx="323" cy="660" r="1.6"/><circle cx="556" cy="52" r="0.9"/><circle cx="1252" cy="479" r="0.9"/></g>
<g fill="#e9cfe0" fill-opacity="0.14"><circle cx="89" cy="118" r="0.9"/><circle cx="37" cy="107" r="0.9"/><circle cx="84" cy="166" r="0.9"/><circle cx="97" cy="152" r="0.9"/><circle cx="33" cy="278" r="1.6"/><circle cx="391" cy="48" r="0.9"/><circle cx="104" cy="27" r="1.2"/><circle cx="31" cy="299" r="1.2"/></g>
<g fill="#dfe8f7" fill-opacity="0.22"><circle cx="194" cy="35" r="0.9"/><circle cx="225" cy="42" r="0.9"/><circle cx="27" cy="66" r="1.2"/><circle cx="118" cy="134" r="0.9"/><circle cx="129" cy="156" r="0.9"/><circle cx="50" cy="33" r="0.9"/><circle cx="391" cy="39" r="0.9"/><circle cx="33" cy="192" r="0.9"/><circle cx="77" cy="79" r="0.9"/><circle cx="169" cy="29" r="0.9"/><circle cx="137" cy="75" r="0.9"/><circle cx="102" cy="123" r="1.2"/><circle cx="23" cy="330" r="0.9"/><circle cx="14" cy="305" r="1.2"/><circle cx="175" cy="45" r="1.2"/><circle cx="3" cy="53" r="1.6"/><circle cx="39" cy="197" r="0.9"/><circle cx="38" cy="72" r="1.2"/><circle cx="7" cy="202" r="0.9"/><circle cx="45" cy="73" r="1.6"/><circle cx="124" cy="125" r="0.9"/><circle cx="37" cy="85" r="1.2"/><circle cx="313" cy="29" r="1.6"/><circle cx="113" cy="35" r="1.2"/></g>
<g fill="#bfe0f5" fill-opacity="0.14"><circle cx="142" cy="167" r="1.6"/><circle cx="2" cy="68" r="0.9"/><circle cx="135" cy="156" r="0.9"/><circle cx="32" cy="323" r="0.9"/><circle cx="59" cy="96" r="0.9"/><circle cx="11" cy="56" r="1.6"/><circle cx="24" cy="263" r="1.2"/></g>
<g fill="#e9cfe0" fill-opacity="0.28"><circle cx="430" cy="38" r="1.2"/><circle cx="21" cy="86" r="1.2"/><circle cx="0" cy="224" r="0.9"/><circle cx="97" cy="48" r="1.6"/><circle cx="101" cy="141" r="1.2"/><circle cx="105" cy="83" r="1.2"/><circle cx="0" cy="129" r="0.9"/></g>
<g fill="#bfe0f5" fill-opacity="0.28"><circle cx="6" cy="295" r="0.9"/><circle cx="114" cy="94" r="0.9"/></g>
<g fill="#bfe0f5" fill-opacity="0.22"><circle cx="59" cy="139" r="1.2"/><circle cx="25" cy="295" r="0.9"/><circle cx="24" cy="159" r="1.2"/><circle cx="81" cy="148" r="1.2"/><circle cx="23" cy="151" r="1.2"/></g>
<g fill="#bfe0f5" fill-opacity="0.35"><circle cx="42" cy="99" r="0.9"/><circle cx="447" cy="33" r="1.2"/></g>
<g fill="#e9cfe0" fill-opacity="0.22"><circle cx="37" cy="136" r="1.6"/><circle cx="169" cy="34" r="1.6"/><circle cx="47" cy="122" r="0.9"/></g>
<g><circle cx="64" cy="612" r="4.5" fill="url(#sg)"/><circle cx="316" cy="677" r="2.8" fill="url(#sg)"/><circle cx="323" cy="678" r="2" fill="url(#sg)"/><circle cx="801" cy="77.5" r="3.5" fill="url(#sg)"/><circle cx="960" cy="24" r="3.5" fill="url(#sg)"/><circle cx="980" cy="55" r="2.5" fill="url(#sg)"/><circle cx="1170.6" cy="63.7" r="2.2" fill="url(#sg)"/><circle cx="1167" cy="82" r="2" fill="url(#sg)"/><circle cx="1183.7" cy="41" r="2.2" fill="url(#sg)"/><circle cx="1064.7" cy="95" r="2.2" fill="url(#pg)"/><circle cx="39.6" cy="289.6" r="3.2" fill="url(#sg)"/><circle cx="43" cy="308" r="5.5" fill="url(#pg)"/><circle cx="18" cy="555" r="5" fill="url(#pg)"/><circle cx="131" cy="46" r="2.6" fill="url(#sg)"/><circle cx="230" cy="46" r="1.5" fill="url(#sg)"/><circle cx="56" cy="59" r="2.4" fill="url(#pg)"/><circle cx="294" cy="712.5" r="2.4" fill="url(#sg)"/><circle cx="294.5" cy="720.5" r="2.2" fill="url(#sg)"/><circle cx="194" cy="723" r="2.2" fill="url(#sg)"/><circle cx="435" cy="709.5" r="2.4" fill="url(#sg)"/><circle cx="442.5" cy="725" r="2" fill="url(#sg)"/><circle cx="1248" cy="724" r="2.6" fill="url(#sg)"/><circle cx="1219" cy="154.8" r="2.4" fill="url(#sg)"/><circle cx="1265" cy="260" r="2.6" fill="url(#sg)"/><circle cx="1207" cy="70" r="2" fill="url(#sg)"/><circle cx="88" cy="37" r="2" fill="url(#sg)"/></g>
</svg>
<div id="menubar">
 <svg class="abs" style="left:19px;top:1px" width="18" height="19" viewBox="0 0 18 19"><path fill="#111" d="M12.6 1.2c.1 1-.3 2-.9 2.700-.6.7-1.600 1.300-2.500 1.200-.1-1 .4-2 .9-2.600.7-.7 1.700-1.300 2.500-1.300zM15.400 13.200c-.4 1-.7 1.500-1.200 2.300-.8 1.200-1.900 2.700-3.200 2.700-1.200 0-1.500-.8-3.100-.8-1.600 0-2 .8-3.100.800-1.300 0-2.400-1.400-3.200-2.600C-.6 12.300-.8 8.400.6 6.500c.9-1.400 2.400-2.200 3.800-2.200 1.400 0 2.300.8 3.500.8 1.100 0 1.800-.8 3.500-.8 1.200 0 2.500.7 3.500 1.800-3.100 1.700-2.600 6 .5 7.100z" transform="translate(.8 -.3) scale(1)"/></svg>
 <span class="t" style="left:54px;-webkit-text-stroke:.6px #111;letter-spacing:.5px">Disk Utility</span>
 <span class="t" style="left:153px">File</span>
 <span class="t" style="left:194px">Edit</span>
 <span class="t" style="left:238px;letter-spacing:-.2px">Images</span>
 <span class="t" style="left:305px">Window</span>
 <span class="t" style="left:377px">Help</span>
 <span class="t" style="left:1131.500px;letter-spacing:.18px">Thu 11:04 AM</span>

 <svg class="abs" style="left:976px;top:1px" width="20" height="20" viewBox="976 1 20 20"><path d="M980.200 12.500A6.500 6.500 0 1 0 980.500 7" fill="none" stroke="#8a8a8a" stroke-width="1.700"/><path d="M977.300 8.300 982.800 8 980 12.800z" fill="#8a8a8a"/><path d="M986.300 6V10.500L989.300 12.300" fill="none" stroke="#8a8a8a" stroke-width="1.300"/></svg>
 <svg class="abs" style="left:1010px;top:2px" width="12" height="17" viewBox="1010 2 12 17"><path d="M1011.800 6.800 1019 13.300 1015.600 16.600V3.700L1019 7 1011.800 13.500" fill="none" stroke="#1a1a1a" stroke-width="1.100"/></svg>
 <svg class="abs" style="left:1034px;top:2px" width="24" height="18" viewBox="1034 2 24 18"><g fill="none" stroke="#151515" stroke-width="2.100"><path d="M1036 8.200A14.200 14.200 0 0 1 1056 8.200"/><path d="M1039.200 11.400A9.700 9.700 0 0 1 1052.800 11.400"/><path d="M1042.400 14.500A5.200 5.200 0 0 1 1049.600 14.500"/></g><circle cx="1046" cy="17.300" r="1.500" fill="#151515"/></svg>
 <svg class="abs" style="left:1066px;top:4px" width="10" height="14" viewBox="1066 4 10 14"><path d="M1067 8.500H1069.500L1074 5V17L1069.500 13.500H1067z" fill="#151515"/></svg>
 <svg class="abs" style="left:1095px;top:3px" width="25" height="16" viewBox="1095 3 25 16"><rect x="1097.700" y="5.800" width="18" height="10.400" rx="1.600" fill="none" stroke="#151515" stroke-width="1.500"/><path d="M1116.700 9.300C1118.200 9.500 1118.200 12.500 1116.700 12.700z" fill="#151515"/><path d="M1102 10.300H1105C1105 8.800 1106 8 1107.500 8H1109V9.300H1111.500V10.100H1109V11.900H1111.500V12.700H1109V14H1107.500C1106 14 1105 13.200 1105 11.700H1102z" fill="#151515"/></svg>
 <svg class="abs" style="left:1244px;top:3px" width="17" height="17" viewBox="1244 3 17 17"><circle cx="1251" cy="9.500" r="4.600" fill="none" stroke="#151515" stroke-width="1.800"/><path d="M1254.300 13 1258.500 17.500" stroke="#151515" stroke-width="2.300" stroke-linecap="round"/></svg>
</div>
<div id="term" class="win">
 <div class="tb">
  <i class="tl off" style="left:8px;top:5px"></i><i class="tl off" style="left:28px;top:5px"></i><i class="tl off" style="left:48px;top:5px"></i>
  <svg class="abs" style="left:188px;top:3px" width="15" height="15" viewBox="0 0 15 15"><path d="M1 7.500 7.500 1.500 14 7.500" fill="none" stroke="#8a8a8a" stroke-width="1.300"/><path d="M3 7.200V13.500H12V7.200L7.500 3z" fill="#f4f4f4" stroke="#9a9a9a" stroke-width=".8"/><rect x="6" y="9" width="3" height="4.500" fill="#d98a5a"/><rect x="11" y="2" width="1.500" height="3.500" fill="#9a9a9a"/></svg>
  <span class="t" id="termtitle" style="left:206.500px;top:5px;letter-spacing:.13px;font-size:12.6px;line-height:14px;color:#7d7d7d">heoxinsu — bash — 80×24</span>
  <svg class="abs" style="left:551px;top:3.500px" width="15.500" height="15.500" viewBox="0 0 14 14"><path d="M8 1h5v5l-1.800-1.800-2.200 2.200-1.400-1.400 2.200-2.200zM6 13H1V8l1.800 1.800 2.200-2.200 1.400 1.400-2.200 2.200z" fill="#ababab"/></svg>
 </div>
<pre>Last login: Thu Aug 22 10:23:36 on console
Nhims-MacBook-Pro:~ heoxinsu$ dot_clean /Volumes/data
Bad Pathname: Permission denied
Merging directory  failed: .fseventsd
undouble /Volumes/data failedNhims-MacBook-Pro:~ heoxinsu$ dot_clean /Volumes/data
Nhims-MacBook-Pro:~ heoxinsu$ /Volumes/data
-bash: /Volumes/data: is a directory
Nhims-MacBook-Pro:~ heoxinsu$ </pre>
</div>
<div id="hidden" class="win"></div>
<div id="finder" class="win">
 <div class="tb">
  <i class="tl off" style="left:8px;top:5px"></i><i class="tl off" style="left:28px;top:5px"></i><i class="tl off" style="left:48px;top:5px"></i>
  <svg class="abs" style="left:361px;top:3px" width="15" height="16" viewBox="0 0 15 16"><path d="M2 1.500h11l1.300 10.500v2.500H.7V12z" fill="#e9e9e9" stroke="#b4b4b4" stroke-width=".8"/><ellipse cx="7.500" cy="7" rx="4" ry="2.200" fill="#d7d7d7"/><rect x=".7" y="12" width="13.600" height="2.500" fill="#c4c4c4"/><rect x="3" y="2.600" width="9" height="1" fill="#9c9c9c"/><rect x="11.500" y="12.800" width="1.400" height="1" fill="#d8d04a"/></svg>
  <span class="t" id="ftitle" style="left:379.500px;top:5px;font-size:12.6px;line-height:14px;color:#8c8c8c">data</span>
  <div class="fbtn" style="left:8px;width:53px"><i class="abs" style="left:26px;top:1px;width:1px;height:18px;background:#cfcfcf"></i>
   <svg class="abs" style="left:8px;top:5px" width="10" height="10" viewBox="0 0 10 10"><path d="M9 .5v9L.8 5z" fill="#a6a6a6"/></svg>
   <svg class="abs" style="left:33px;top:5px" width="10" height="10" viewBox="0 0 10 10"><path d="M1 .5v9L9.200 5z" fill="#b9b9b9"/></svg></div>
  <div class="fbtn" style="left:140px;width:112px;overflow:hidden">
   <i class="abs" style="left:28px;top:-1px;width:28px;height:22px;background:linear-gradient(180deg,#a9a9a9,#b7b7b7);box-shadow:inset 0 1px 2px rgba(0,0,0,.25)"></i>
   <i class="abs" style="left:83px;top:1px;width:1px;height:18px;background:#cfcfcf"></i>
   <svg class="abs" style="left:9px;top:5px" width="11" height="10" viewBox="0 0 11 10"><g fill="none" stroke="#7b7b7b" stroke-width="1"><rect x=".5" y=".5" width="3.400" height="3"/><rect x="7" y=".5" width="3.400" height="3"/><rect x=".5" y="6.300" width="3.400" height="3"/><rect x="7" y="6.300" width="3.400" height="3"/></g></svg>
   <svg class="abs" style="left:36px;top:5px" width="12" height="11" viewBox="0 0 12 11"><path d="M.5 1h11M.5 4h11M.5 7h11M.5 10h11" stroke="#f4f4f4" stroke-width="1.200"/></svg>
   <svg class="abs" style="left:62px;top:5px" width="14" height="10" viewBox="0 0 14 10"><g fill="none" stroke="#7b7b7b" stroke-width="1"><rect x=".5" y=".5" width="13" height="9"/><path d="M4.800.5v9M9.200.5v9"/></g></svg>
   <svg class="abs" style="left:89px;top:5px" width="16" height="10" viewBox="0 0 16 10"><rect x="4" y="1" width="8" height="8" fill="#a0a0a0" stroke="#7b7b7b" stroke-width="1"/><path d="M.7 0v10M2.300.5v9M13.700.5v9M15.300 0v10" stroke="#7b7b7b" stroke-width="1"/></svg>
  </div>
  <div class="fbtn" style="left:260px;width:40px">
   <svg class="abs" style="left:6px;top:2px" width="16" height="16" viewBox="0 0 16 16"><g transform="translate(8 8)"><g fill="#8b8b8b"><rect x="-1.300" y="-7.500" width="2.600" height="15"/><rect x="-1.300" y="-7.500" width="2.600" height="15" transform="rotate(45)"/><rect x="-1.300" y="-7.500" width="2.600" height="15" transform="rotate(90)"/><rect x="-1.300" y="-7.500" width="2.600" height="15" transform="rotate(135)"/></g><circle r="5" fill="#8b8b8b"/><circle r="2.600" fill="#f1f1f1"/></g></svg>
   <svg class="abs" style="left:26px;top:8px" width="7" height="4.500" viewBox="0 0 8 5"><path d="M0 0h8L4 5z" fill="#9d9d9d"/></svg></div>
  <div class="fbtn" style="left:308px;width:40px">
   <svg class="abs" style="left:7px;top:5px" width="13" height="11" viewBox="0 0 13 11"><g fill="none" stroke="#7f7f7f" stroke-width="1"><path d="M0 .5h13M0 6h13"/><rect x=".5" y="2.200" width="2.600" height="2"/><rect x="5.200" y="2.200" width="2.600" height="2"/><rect x="9.900" y="2.200" width="2.600" height="2"/><rect x=".5" y="7.800" width="2.600" height="2"/><rect x="5.200" y="7.800" width="2.600" height="2"/><rect x="9.900" y="7.800" width="2.600" height="2"/></g></svg>
   <svg class="abs" style="left:26px;top:8px" width="7" height="4.500" viewBox="0 0 8 5"><path d="M0 0h8L4 5z" fill="#9d9d9d"/></svg></div>
 </div>
 <div id="side">
  <span class="h" style="top:6px">FAVORITES</span>
  <svg style="top:23px" width="18" height="18" viewBox="0 0 18 18"><path d="M3.600 1.500h10.800l1.600 9.500H2z" fill="#fafafa" stroke="#7d848d" stroke-width=".9"/><path d="M5.200 3.700h7.600M5 5.700h8M4.800 7.700h8.400M4.600 9.600h8.800" stroke="#7d848d" stroke-width=".8"/><path d="M1.300 11h15.400v5.700H1.300z" fill="#7d848d"/><rect x="6.300" y="13.200" width="5.400" height="1.300" rx=".5" fill="#eee"/></svg><span class="it" style="top:26px">All My Files</span>
  <svg style="top:48px" width="18" height="18" viewBox="0 0 18 18"><path d="M.8 8C.8 3.500 4.500.8 9 .8S17.200 3.500 17.200 8c-1.400-1-2.700-1-4.100 0-1.400-1-2.700-1-4.100 0-1.400-1-2.700-1-4.100 0C3.500 7 2.200 7 .8 8z" fill="#7d848d"/><path d="M1.500 8 6.500 13.500M16.500 8l-5 5.500M5 8l2.800 5.500M13 8l-2.800 5.500M9 8v5.500" stroke="#7d848d" stroke-width=".9" fill="none"/><rect x="5.500" y="13.500" width="7" height="3.500" fill="#7d848d"/></svg><span class="it" style="top:50px">AirDrop</span>
  <svg style="top:72px" width="19" height="18" viewBox="0 0 19 18"><path d="M9.500 1 3 17M9.500 1 16 17" stroke="#7d848d" stroke-width="2.200" fill="none" stroke-linecap="round"/><path d="M1 10.500h17" stroke="#7d848d" stroke-width="1.800"/><path d="M1 10v4M18 10v4" stroke="#7d848d" stroke-width="1.200"/><path d="M11.500 2.500 4.500 15l-1.200 2.500" stroke="#aab0b7" stroke-width="1.600" fill="none"/></svg><span class="it" style="top:74px">Applications</span>
  <svg style="top:96px" width="18" height="17" viewBox="0 0 18 17"><rect x=".8" y=".8" width="16.400" height="15" rx="1.500" fill="#e6e7e9" stroke="#7d848d" stroke-width="1.400"/><rect x="1.500" y="1.500" width="15" height="1.800" fill="#c9ccd0"/><path d="M3 15.300 5 11h8l2 4.300z" fill="#7d848d"/><rect x="5.600" y="12.300" width="1.600" height="1.400" fill="#fff"/><rect x="8.200" y="12.300" width="1.600" height="1.400" fill="#fff"/><rect x="10.800" y="12.300" width="1.600" height="1.400" fill="#fff"/></svg><span class="it" style="top:98px">Desktop</span>
  <svg style="top:120px" width="18" height="18" viewBox="0 0 18 18"><path d="M7 1h6l3.500 3.500V13H7z" fill="#dfe1e4" stroke="#7d848d" stroke-width="1"/><path d="M13 1v3.500h3.500" fill="#fff" stroke="#7d848d" stroke-width=".9"/><path d="M1.500 5h6L11 8.500V17H1.500z" fill="#ecedef" stroke="#7d848d" stroke-width="1"/><path d="M7.500 5v3.500H11" fill="#fff" stroke="#7d848d" stroke-width=".9"/></svg><span class="it" style="top:122px">Documents</span>
  <svg style="top:144px" width="18" height="18" viewBox="0 0 18 18"><circle cx="9" cy="9" r="8.600" fill="#7d848d"/><path d="M6.800 3.500h4.400V9h3.300L9 14.800 3.500 9h3.300z" fill="#fff"/></svg><span class="it" style="top:146px">Downloads</span>
  <svg style="top:168px" width="18" height="18" viewBox="0 0 18 18"><rect x="1.200" y="1" width="15.600" height="16" fill="#f0f1f2" stroke="#7d848d" stroke-width="1"/><rect x="4.300" y="1.500" width="9.400" height="7" fill="#d4d7da" stroke="#7d848d" stroke-width=".8"/><rect x="4.300" y="9.500" width="9.400" height="7" fill="#d4d7da" stroke="#7d848d" stroke-width=".8"/><path d="M2.700 2v14M15.300 2v14" stroke="#7d848d" stroke-width="1.600" stroke-dasharray="1.400 1.300"/></svg><span class="it" style="top:170px">Movies</span>
  <svg style="top:192px" width="18" height="18" viewBox="0 0 18 18"><path d="M6 3.500 16 1v11.500" fill="none" stroke="#7d848d" stroke-width="1.600"/><path d="M6 3.500V14" stroke="#7d848d" stroke-width="1.600"/><path d="M6 3.200 16 .8v3L6 6.200z" fill="#7d848d"/><ellipse cx="3.800" cy="14.300" rx="3" ry="2.300" fill="#7d848d"/><ellipse cx="13.800" cy="12.800" rx="3" ry="2.300" fill="#7d848d"/></svg><span class="it" style="top:194px">Music</span>
  <svg style="top:216px" width="19" height="16" viewBox="0 0 19 16"><path d="M1 4c0-.8.600-1.400 1.400-1.400H5L6.200.8h6.600L14 2.600h2.600c.8 0 1.400.6 1.400 1.400v9.600c0 .8-.6 1.400-1.400 1.400H2.400C1.600 15 1 14.400 1 13.600z" fill="#7d848d"/><circle cx="9.500" cy="8.600" r="4.500" fill="#eceef0"/><circle cx="9.500" cy="8.600" r="2.600" fill="#7d848d"/><circle cx="9.500" cy="8.600" r="1.300" fill="#d8dbde"/></svg><span class="it" style="top:218px">Pictures</span>
  <span class="h" style="top:249px;letter-spacing:-.3px">DEVICES</span>
  <div class="sel"></div>
  <svg style="top:267px" width="18" height="19" viewBox="0 0 18 19"><path d="M3 1h12l1.500 13v4h-15v-4z" fill="none" stroke="#f3f5f9" stroke-width="1.200"/><circle cx="9" cy="7.500" r="4.300" fill="none" stroke="#f3f5f9" stroke-width="1"/><circle cx="9" cy="7.500" r="1.700" fill="none" stroke="#f3f5f9" stroke-width=".9"/><path d="M13 3v5" stroke="#f3f5f9" stroke-width="1"/><path d="M1.500 14h15" stroke="#f3f5f9" stroke-width="1"/><path d="M3.500 16h11" stroke="#f3f5f9" stroke-width="1.400" stroke-dasharray="1.600 1"/></svg>
  <span class="it" style="top:269px;font-weight:bold;letter-spacing:-.55px;color:#fff;text-shadow:0 1px 1px rgba(60,70,100,.6)">data</span>
  <svg style="top:290px" width="18" height="20" viewBox="0 0 18 20"><defs><linearGradient id="fa" x1="0" y1="0" x2="0" y2="1"><stop offset="0" stop-color="#f4f4f4"/><stop offset="1" stop-color="#c9cbce"/></linearGradient></defs><path d="M3.500 1h11c.8 0 1.400.5 1.500 1.300L17 15v2.500c0 .8-.6 1.500-1.400 1.500H2.400C1.600 19 1 18.300 1 17.500V15L2 2.300C2.100 1.500 2.700 1 3.500 1z" fill="url(#fa)" stroke="#80868e" stroke-width="1"/><path d="M1.200 15h15.600" stroke="#80868e" stroke-width=".9"/><rect x="13.400" y="16.600" width="1.500" height="1" fill="#555"/></svg>
  <span class="it" style="top:293px">FreeAg…</span>
  <svg style="left:110px;top:294px" width="11" height="10" viewBox="0 0 11 10"><path d="M5.500 0 10.500 5.500H.5zM.5 7.200h10V9.500H.5z" fill="#5f5f5f"/></svg>
 </div>
 <div id="list">
  <div class="st"></div>
  <div class="hd"><span class="t" style="left:47.500px;top:1.500px;font-size:11.6px;line-height:14px">Name</span></div>
  <div class="r" style="top:16px"><b></b><svg width="17" height="16" viewBox="0 0 17 16"><defs><linearGradient id="fg0" x1="0" y1="0" x2="0" y2="1"><stop offset="0" stop-color="#a9cfec"/><stop offset="1" stop-color="#6fa3cf"/></linearGradient></defs><path d="M1 2.500c0-.6.400-1 1-1h4.200l1.300 1.500H15c.6 0 1 .4 1 1v10c0 .6-.4 1-1 1H2c-.6 0-1-.4-1-1z" fill="#8fb9dc" stroke="#5f8fb8" stroke-width=".6"/><rect x="1.300" y="4.300" width="14.400" height="10.400" rx=".8" fill="url(#fg0)"/><path d="M1.500 4.800h14" stroke="#cfe6f7" stroke-width=".7"/></svg><span id="fr0" style="letter-spacing:0.3px">2011_12_24</span></div>
  <div class="r alt" style="top:35px"><b></b><svg width="17" height="16" viewBox="0 0 17 16"><defs><linearGradient id="fg1" x1="0" y1="0" x2="0" y2="1"><stop offset="0" stop-color="#a9cfec"/><stop offset="1" stop-color="#6fa3cf"/></linearGradient></defs><path d="M1 2.500c0-.6.400-1 1-1h4.200l1.300 1.500H15c.6 0 1 .4 1 1v10c0 .6-.4 1-1 1H2c-.6 0-1-.4-1-1z" fill="#8fb9dc" stroke="#5f8fb8" stroke-width=".6"/><rect x="1.300" y="4.300" width="14.400" height="10.400" rx=".8" fill="url(#fg1)"/><path d="M1.500 4.800h14" stroke="#cfe6f7" stroke-width=".7"/></svg><span id="fr1" style="letter-spacing:0.3px">2011_12_25</span></div>
  <div class="r" style="top:54px"><b></b><svg width="17" height="16" viewBox="0 0 17 16"><defs><linearGradient id="fg2" x1="0" y1="0" x2="0" y2="1"><stop offset="0" stop-color="#a9cfec"/><stop offset="1" stop-color="#6fa3cf"/></linearGradient></defs><path d="M1 2.500c0-.6.400-1 1-1h4.200l1.300 1.500H15c.6 0 1 .4 1 1v10c0 .6-.4 1-1 1H2c-.6 0-1-.4-1-1z" fill="#8fb9dc" stroke="#5f8fb8" stroke-width=".6"/><rect x="1.300" y="4.300" width="14.400" height="10.400" rx=".8" fill="url(#fg2)"/><path d="M1.500 4.800h14" stroke="#cfe6f7" stroke-width=".7"/></svg><span id="fr2" style="letter-spacing:0.05px">Adobe CS5 Master…(MAC) - Shadeyman</span></div>
  <div class="r alt" style="top:73px"><b></b><svg width="17" height="16" viewBox="0 0 17 16"><defs><linearGradient id="fg3" x1="0" y1="0" x2="0" y2="1"><stop offset="0" stop-color="#a9cfec"/><stop offset="1" stop-color="#6fa3cf"/></linearGradient></defs><path d="M1 2.500c0-.6.400-1 1-1h4.200l1.300 1.500H15c.6 0 1 .4 1 1v10c0 .6-.4 1-1 1H2c-.6 0-1-.4-1-1z" fill="#8fb9dc" stroke="#5f8fb8" stroke-width=".6"/><rect x="1.300" y="4.300" width="14.400" height="10.400" rx=".8" fill="url(#fg3)"/><path d="M1.500 4.800h14" stroke="#cfe6f7" stroke-width=".7"/></svg><span id="fr3" style="letter-spacing:0.09px">Battleship.2012.PR…luRay.x264-SPARKS</span></div>
  <div class="r" style="top:92px"><b></b><svg width="17" height="16" viewBox="0 0 17 16"><defs><linearGradient id="fg4" x1="0" y1="0" x2="0" y2="1"><stop offset="0" stop-color="#a9cfec"/><stop offset="1" stop-color="#6fa3cf"/></linearGradient></defs><path d="M1 2.500c0-.6.400-1 1-1h4.200l1.300 1.500H15c.6 0 1 .4 1 1v10c0 .6-.4 1-1 1H2c-.6 0-1-.4-1-1z" fill="#8fb9dc" stroke="#5f8fb8" stroke-width=".6"/><rect x="1.300" y="4.300" width="14.400" height="10.400" rx=".8" fill="url(#fg4)"/><path d="M1.500 4.800h14" stroke="#cfe6f7" stroke-width=".7"/></svg><span id="fr4" style="letter-spacing:0.27px">MS-Office2010</span></div>
  <div class="r alt" style="top:111px"><b></b><svg width="17" height="16" viewBox="0 0 17 16"><defs><linearGradient id="fg5" x1="0" y1="0" x2="0" y2="1"><stop offset="0" stop-color="#a9cfec"/><stop offset="1" stop-color="#6fa3cf"/></linearGradient></defs><path d="M1 2.500c0-.6.400-1 1-1h4.200l1.300 1.500H15c.6 0 1 .4 1 1v10c0 .6-.4 1-1 1H2c-.6 0-1-.4-1-1z" fill="#8fb9dc" stroke="#5f8fb8" stroke-width=".6"/><rect x="1.300" y="4.300" width="14.400" height="10.400" rx=".8" fill="url(#fg5)"/><path d="M1.500 4.800h14" stroke="#cfe6f7" stroke-width=".7"/></svg><span id="fr5">rua hinh</span></div>
  <div class="r" style="top:130px"><b></b><svg width="17" height="16" viewBox="0 0 17 16"><defs><linearGradient id="fg6" x1="0" y1="0" x2="0" y2="1"><stop offset="0" stop-color="#a9cfec"/><stop offset="1" stop-color="#6fa3cf"/></linearGradient></defs><path d="M1 2.500c0-.6.400-1 1-1h4.200l1.300 1.500H15c.6 0 1 .4 1 1v10c0 .6-.4 1-1 1H2c-.6 0-1-.4-1-1z" fill="#8fb9dc" stroke="#5f8fb8" stroke-width=".6"/><rect x="1.300" y="4.300" width="14.400" height="10.400" rx=".8" fill="url(#fg6)"/><path d="M1.500 4.800h14" stroke="#cfe6f7" stroke-width=".7"/></svg><span id="fr6">temp</span></div>
 </div>
</div>
<div id="du" class="win">
 <div class="tb">
  <i class="tl r" style="left:8px;top:5px"></i><i class="tl y" style="left:28px;top:5px"></i><i class="tl g" style="left:48px;top:5px"></i>
  <span class="t" id="dutitle" style="left:335.500px;top:5px;letter-spacing:.1px;font-size:12.6px;line-height:14px;color:#303030;text-shadow:0 1px 0 rgba(255,255,255,.6)">Disk Utility</span>
  <svg class="abs" style="left:15px;top:29px" width="24" height="29" viewBox="0 0 24 29">
 <ellipse cx="11.500" cy="27" rx="10" ry="1.200" fill="rgba(0,0,0,.25)"/>
 <path d="M2.500 25.200c0-1.300 1.500-2 4-2.200h9c1.800.2 3 .9 3 2.200 0 .9-.8 1.300-1.800 1.300H4.300c-1 0-1.800-.4-1.800-1.300z" fill="#0b0b0b"/>
 <path d="M14.200.6 17.400 1.800 11.400 13.800 8.200 12.400z" fill="#0b0b0b"/>
 <path d="M13.200 1.400 15.600.2 16.800 1 14.400 2.500z" fill="#0b0b0b"/>
 <path d="M16 6.500c3.200 1.500 5 5 4.300 9-.6 3.400-2.600 6-5.500 7.600l-2.300-1.500c2.800-1.700 4.400-3.800 4.800-6.500.4-2.700-.7-4.700-2.700-6z" fill="#0b0b0b"/>
 <circle cx="17" cy="8.200" r="2.500" fill="#111"/><circle cx="17" cy="8.200" r="1.500" fill="#ddd"/><path d="M17 7.200v1.200l.8.500" stroke="#333" stroke-width=".5" fill="none"/>
 <path d="M4.200 13.200 12.800 16.200 12.300 17.800 3.700 14.800z" fill="#0b0b0b"/>
 <path d="M6 17.500h7.500v3H6z" fill="#0b0b0b"/><path d="M7.500 20h5v3.500h-5z" fill="#0b0b0b"/>
 <circle cx="14" cy="21.500" r="1.900" fill="#111"/><circle cx="14" cy="21.500" r="1" fill="#e6e6e6"/>
 <circle cx="7.800" cy="19.200" r=".9" fill="#ddd"/>
</svg><svg class="abs" style="left:55px;top:30px" width="29" height="29" viewBox="0 0 29 29"><defs><radialGradient id="ig" cx=".5" cy=".45" r=".55"><stop offset="0" stop-color="#b1bff0"/><stop offset=".85" stop-color="#a8b7ea"/><stop offset="1" stop-color="#98a7d9"/></radialGradient></defs>
 <ellipse cx="14.500" cy="27" rx="9" ry="1.300" fill="rgba(0,0,0,.12)"/>
 <circle cx="14.500" cy="14.300" r="13.300" fill="url(#ig)"/>
 <text x="14.700" y="22.300" text-anchor="middle" font-family="'Liberation Serif','DejaVu Serif',serif" font-style="italic" font-weight="bold" font-size="24" fill="#fff">i</text>
</svg><svg class="abs" style="left:96px;top:29px" width="30" height="31" viewBox="0 0 30 31"><defs><radialGradient id="bg1" cx=".5" cy=".4" r=".6"><stop offset="0" stop-color="#fff" stop-opacity=".0"/><stop offset=".8" stop-color="#000" stop-opacity=".0"/><stop offset="1" stop-color="#000" stop-opacity=".28"/></radialGradient><linearGradient id="bg2" x1="0" y1="0" x2="0" y2="1"><stop offset="0" stop-color="#fff" stop-opacity=".55"/><stop offset="1" stop-color="#fff" stop-opacity="0"/></linearGradient><clipPath id="bc"><circle cx="15" cy="15" r="14.200"/></clipPath></defs><ellipse cx="15" cy="29.300" rx="9" ry="1.200" fill="rgba(0,0,0,.15)"/><g clip-path="url(#bc)"><path d="M15 15L30.00 15.00A15 15 0 0 1 22.50 27.99z" fill="#f0da98"/><path d="M15 15L22.50 27.99A15 15 0 0 1 7.50 27.99z" fill="#7d7d7d"/><path d="M15 15L7.50 27.99A15 15 0 0 1 0.00 15.00z" fill="#f0da98"/><path d="M15 15L0.00 15.00A15 15 0 0 1 7.50 2.01z" fill="#7d7d7d"/><path d="M15 15L7.50 2.01A15 15 0 0 1 22.50 2.01z" fill="#f2c9a2"/><path d="M15 15L22.50 2.01A15 15 0 0 1 30.00 15.00z" fill="#7d7d7d"/></g><circle cx="15" cy="15" r="14.200" fill="url(#bg1)"/><ellipse cx="15" cy="6.500" rx="9.500" ry="5.500" fill="url(#bg2)"/></svg><svg class="abs" style="left:150px;top:32px" width="25" height="27" viewBox="0 0 25 27"><defs><linearGradient id="mg" x1="0" y1="0" x2="0" y2="1"><stop offset="0" stop-color="#a3ccf3"/><stop offset=".5" stop-color="#86b8ec"/><stop offset="1" stop-color="#7eace6"/></linearGradient></defs><ellipse cx="12.500" cy="24.800" rx="8" ry="1.200" fill="rgba(0,0,0,.15)"/><circle cx="12.500" cy="12.500" r="11.600" fill="url(#mg)" stroke="#7ba3d8" stroke-width=".8"/><path d="M12.500 5.800 16.700 10H8.300zM8.300 11.500h8.400v2.200H8.300zM8.300 15.200h8.400L12.500 19.400z" fill="#eef5fd"/></svg><svg class="abs" style="left:201px;top:32px" width="25" height="27" viewBox="0 0 25 27"><defs><linearGradient id="eg" x1="0" y1="0" x2="0" y2="1"><stop offset="0" stop-color="#a3ccf3"/><stop offset=".5" stop-color="#86b8ec"/><stop offset="1" stop-color="#7eace6"/></linearGradient></defs><ellipse cx="12.500" cy="24.800" rx="8" ry="1.200" fill="rgba(0,0,0,.15)"/><circle cx="12.500" cy="12.500" r="11.600" fill="url(#eg)" stroke="#7ba3d8" stroke-width=".8"/><path d="M12.500 6.500 17.300 12.200H7.700zM7.700 13.800h9.600v2.600H7.700z" fill="#eef5fd"/></svg><svg class="abs" style="left:268px;top:26px" width="36" height="36" viewBox="0 0 36 36"><defs><radialGradient id="jg" cx=".5" cy=".45" r=".55"><stop offset="0" stop-color="#a6e2b6"/><stop offset=".8" stop-color="#8fd8a4"/><stop offset="1" stop-color="#7fcb96"/></radialGradient></defs>
 <circle cx="18" cy="18" r="16" fill="url(#jg)"/>
 <g transform="translate(8.5 7.5) scale(1.3)" opacity="0.24"><path d="M2.200 1h10.600l1.500 10.500V15H.7v-3.500z" fill="#d9d9d9" stroke="#8d8d8d" stroke-width=".8"/><rect x="3.200" y="2.200" width="8.600" height="1.200" fill="#555"/><ellipse cx="7.500" cy="7.500" rx="4.300" ry="2.400" fill="#c2c2c2"/><rect x=".7" y="11.500" width="13.600" height="3.500" fill="#a9a9a9" stroke="#8d8d8d" stroke-width=".6"/><path d="M2 13.300h8" stroke="#666" stroke-width="1.400" stroke-dasharray=".8 .7"/><rect x="11.600" y="12.600" width="1.500" height="1.300" fill="#e9e03a"/></g>
 <path d="M9.500 2v14M2.500 9h14" stroke="#d9fbff" stroke-width="1"/><path d="M6.500 6l6 6M12.500 6l-6 6" stroke="#d9fbff" stroke-width=".6"/><circle cx="9.500" cy="9" r="1.600" fill="#fff"/>
</svg><svg class="abs" style="left:358px;top:26px" width="34" height="36" viewBox="0 0 34 36">
 <path d="M2.500 2.500h18l5.500 5.500v24.500H2.500z" fill="#fff" stroke="#9d9d9d" stroke-width=".9"/>
 <path d="M2.500 33h23.500" stroke="rgba(0,0,0,.25)" stroke-width="1"/>
 <g transform="translate(6.5 11) scale(1.05)" opacity="1"><path d="M2.200 1h10.600l1.500 10.500V15H.7v-3.500z" fill="#d9d9d9" stroke="#8d8d8d" stroke-width=".8"/><rect x="3.200" y="2.200" width="8.600" height="1.200" fill="#555"/><ellipse cx="7.500" cy="7.500" rx="4.300" ry="2.400" fill="#c2c2c2"/><rect x=".7" y="11.500" width="13.600" height="3.500" fill="#a9a9a9" stroke="#8d8d8d" stroke-width=".6"/><path d="M2 13.300h8" stroke="#666" stroke-width="1.400" stroke-dasharray=".8 .7"/><rect x="11.600" y="12.600" width="1.500" height="1.300" fill="#e9e03a"/></g>
 <path d="M21.500 2.300h4v3.700h3.700v4h-3.700v3.700h-4V10h-3.700V6h3.700z" fill="#fff" stroke="#4275bd" stroke-width="1.100"/>
</svg><svg class="abs" style="left:416px;top:26px" width="34" height="36" viewBox="0 0 34 36">
 <path d="M10.5 2.5h14.5l5 5v19h-19.5z" fill="#fff" stroke="#9a9a9a" stroke-width=".9"/><path d="M25.0 2.5v5h5" fill="#ececec" stroke="#9a9a9a" stroke-width=".7"/>
 <g transform="translate(15.5 9) scale(0.8)" opacity="1"><path d="M2.200 1h10.600l1.500 10.500V15H.7v-3.500z" fill="#d9d9d9" stroke="#8d8d8d" stroke-width=".8"/><rect x="3.200" y="2.200" width="8.600" height="1.200" fill="#555"/><ellipse cx="7.500" cy="7.500" rx="4.300" ry="2.400" fill="#c2c2c2"/><rect x=".7" y="11.500" width="13.600" height="3.500" fill="#a9a9a9" stroke="#8d8d8d" stroke-width=".6"/><path d="M2 13.300h8" stroke="#666" stroke-width="1.400" stroke-dasharray=".8 .7"/><rect x="11.600" y="12.600" width="1.500" height="1.300" fill="#e9e03a"/></g>
 <path d="M2.5 8.5h14.5l5 5v19h-19.5z" fill="#fff" stroke="#9a9a9a" stroke-width=".9"/><path d="M17.0 8.5v5h5" fill="#ececec" stroke="#9a9a9a" stroke-width=".7"/>
 <path d="M2.500 33h19.500" stroke="rgba(0,0,0,.25)" stroke-width="1"/>
 <g transform="translate(6.5 16) scale(0.8)" opacity="1"><path d="M2.200 1h10.600l1.500 10.500V15H.7v-3.500z" fill="#d9d9d9" stroke="#8d8d8d" stroke-width=".8"/><rect x="3.200" y="2.200" width="8.600" height="1.200" fill="#555"/><ellipse cx="7.500" cy="7.500" rx="4.300" ry="2.400" fill="#c2c2c2"/><rect x=".7" y="11.500" width="13.600" height="3.500" fill="#a9a9a9" stroke="#8d8d8d" stroke-width=".6"/><path d="M2 13.300h8" stroke="#666" stroke-width="1.400" stroke-dasharray=".8 .7"/><rect x="11.600" y="12.600" width="1.500" height="1.300" fill="#e9e03a"/></g>
</svg><svg class="abs" style="left:482px;top:26px" width="34" height="36" viewBox="0 0 34 36" opacity=".55">
 <path d="M2.5 2.5h16.5l7 7v23h-23.5z" fill="#f1f1f1" stroke="#9a9a9a" stroke-width=".9"/><path d="M19.0 2.5v7h7" fill="#ececec" stroke="#9a9a9a" stroke-width=".7"/>
 <g transform="translate(5.5 11) scale(1)" opacity="1"><path d="M2.200 1h10.600l1.500 10.500V15H.7v-3.500z" fill="#d9d9d9" stroke="#8d8d8d" stroke-width=".8"/><rect x="3.200" y="2.200" width="8.600" height="1.200" fill="#555"/><ellipse cx="7.500" cy="7.500" rx="4.300" ry="2.400" fill="#c2c2c2"/><rect x=".7" y="11.500" width="13.600" height="3.500" fill="#a9a9a9" stroke="#8d8d8d" stroke-width=".6"/><path d="M2 13.300h8" stroke="#666" stroke-width="1.400" stroke-dasharray=".8 .7"/><rect x="11.600" y="12.600" width="1.500" height="1.300" fill="#e9e03a"/></g>
 <path d="M18 17h9l4 4v11.5h-13z" fill="#f1f1f1" stroke="#9a9a9a" stroke-width=".9"/><path d="M27 17v4h4" fill="#ececec" stroke="#9a9a9a" stroke-width=".7"/>
 <g transform="translate(21 24) scale(0.45)" opacity="1"><path d="M2.200 1h10.600l1.500 10.500V15H.7v-3.500z" fill="#d9d9d9" stroke="#8d8d8d" stroke-width=".8"/><rect x="3.200" y="2.200" width="8.600" height="1.200" fill="#555"/><ellipse cx="7.500" cy="7.500" rx="4.300" ry="2.400" fill="#c2c2c2"/><rect x=".7" y="11.500" width="13.600" height="3.500" fill="#a9a9a9" stroke="#8d8d8d" stroke-width=".6"/><path d="M2 13.300h8" stroke="#666" stroke-width="1.400" stroke-dasharray=".8 .7"/><rect x="11.600" y="12.600" width="1.500" height="1.300" fill="#e9e03a"/></g>
</svg><svg class="abs" style="left:699px;top:31px" width="32" height="26" viewBox="0 0 32 26"><defs><linearGradient id="lg1" x1="0" y1="0" x2="0" y2="1"><stop offset="0" stop-color="#f2f2f2"/><stop offset="1" stop-color="#a8a8a8"/></linearGradient><clipPath id="lc"><rect x="1" y="4" width="30" height="17"/></clipPath></defs>
 <rect x="1" y="1" width="30" height="24" fill="url(#lg1)"/><rect x="1" y="4.500" width="30" height="16.500" fill="#15120a"/>
 <g clip-path="url(#lc)" font-family="'DejaVu Sans Mono','Liberation Mono',monospace" font-weight="bold" fill="#e9a21c">
  <text x=".3" y="11.800" font-size="7.500" textLength="30.500" lengthAdjust="spacingAndGlyphs">WARNIN</text>
  <text x="-1.500" y="19.800" font-size="7.500" textLength="34.500" lengthAdjust="spacingAndGlyphs">AY 7:36 I</text>
 </g>
 <path d="M1 21.500h30" stroke="#fff" stroke-opacity=".7"/><path d="M1 25h30" stroke="#8a8a8a"/>
</svg>
  <span class="lb" id="lb0" style="left:9.5px">Verify</span>
  <span class="lb d" id="lb1" style="left:57.9px">Info</span>
  <span class="lb d" id="lb2" style="left:97.8px">Burn</span>
  <span class="lb d" id="lb3" style="left:145.0px">Mount</span>
  <span class="lb d" id="lb4" style="left:200.0px">Eject</span>
  <span class="lb d" id="lb5" style="left:239.1px">Enable Journaling</span>
  <span class="lb" id="lb6" style="left:341.9px">New Image</span>
  <span class="lb" id="lb7" style="left:411.0px">Convert</span>
  <span class="lb d" id="lb8" style="left:462.9px">Resize Image</span>
  <span class="lb" id="lb9" style="left:705.0px">Log</span>
 </div>
 <div id="dlist">
  <svg style="left:5px;top:2px" width="15" height="16" viewBox="0 0 15 16"><defs><linearGradient id="dg0" x1="0" y1="0" x2="0" y2="1"><stop offset="0" stop-color="#f2f2f2"/><stop offset="1" stop-color="#c6c6c6"/></linearGradient></defs><path d="M2.200 1h10.600l1.500 10.500V15H.7v-3.500z" fill="url(#dg0)" stroke="#8d8d8d" stroke-width=".8"/><rect x="3.200" y="2.200" width="8.600" height="1.200" fill="#6f6f6f"/><ellipse cx="7.500" cy="7.500" rx="4.300" ry="2.400" fill="#cfcfcf" stroke="#b1b1b1" stroke-width=".5"/><rect x=".7" y="11.500" width="13.600" height="3.500" fill="#b5b5b5" stroke="#8d8d8d" stroke-width=".6"/><path d="M2 13.300h8" stroke="#777" stroke-width="1.400" stroke-dasharray=".8 .7"/><rect x="11.600" y="12.600" width="1.500" height="1.300" fill="#e4dc3c"/></svg><span id="dl0" style="left:21.5px;top:3px">180.05 GB INTEL SSDSC…</span>
  <svg style="left:21px;top:23px" width="15" height="16" viewBox="0 0 15 16"><defs><linearGradient id="dg1" x1="0" y1="0" x2="0" y2="1"><stop offset="0" stop-color="#f2f2f2"/><stop offset="1" stop-color="#c6c6c6"/></linearGradient></defs><path d="M2.200 1h10.600l1.500 10.500V15H.7v-3.500z" fill="url(#dg1)" stroke="#8d8d8d" stroke-width=".8"/><rect x="3.200" y="2.200" width="8.600" height="1.200" fill="#6f6f6f"/><ellipse cx="7.500" cy="7.500" rx="4.300" ry="2.400" fill="#cfcfcf" stroke="#b1b1b1" stroke-width=".5"/><rect x=".7" y="11.500" width="13.600" height="3.500" fill="#b5b5b5" stroke="#8d8d8d" stroke-width=".6"/><path d="M2 13.300h8" stroke="#777" stroke-width="1.400" stroke-dasharray=".8 .7"/><rect x="11.600" y="12.600" width="1.500" height="1.300" fill="#e4dc3c"/></svg><span id="dl1" style="left:38.0px;top:24px">Macos</span>
  <svg style="left:5px;top:44px" width="15" height="16" viewBox="0 0 15 16"><defs><linearGradient id="dg2" x1="0" y1="0" x2="0" y2="1"><stop offset="0" stop-color="#f2f2f2"/><stop offset="1" stop-color="#c6c6c6"/></linearGradient></defs><path d="M2.200 1h10.600l1.500 10.500V15H.7v-3.500z" fill="url(#dg2)" stroke="#8d8d8d" stroke-width=".8"/><rect x="3.200" y="2.200" width="8.600" height="1.200" fill="#6f6f6f"/><ellipse cx="7.500" cy="7.500" rx="4.300" ry="2.400" fill="#cfcfcf" stroke="#b1b1b1" stroke-width=".5"/><rect x=".7" y="11.500" width="13.600" height="3.500" fill="#b5b5b5" stroke="#8d8d8d" stroke-width=".6"/><path d="M2 13.300h8" stroke="#777" stroke-width="1.400" stroke-dasharray=".8 .7"/><rect x="11.600" y="12.600" width="1.500" height="1.300" fill="#e4dc3c"/></svg><span id="dl2" style="left:21.5px;top:45px">128.04 GB TS128GSSD7…</span>
  <svg style="left:21px;top:65px" width="15" height="16" viewBox="0 0 15 16"><defs><linearGradient id="dg3" x1="0" y1="0" x2="0" y2="1"><stop offset="0" stop-color="#f2f2f2"/><stop offset="1" stop-color="#c6c6c6"/></linearGradient></defs><path d="M2.200 1h10.600l1.500 10.500V15H.7v-3.500z" fill="url(#dg3)" stroke="#8d8d8d" stroke-width=".8"/><rect x="3.200" y="2.200" width="8.600" height="1.200" fill="#6f6f6f"/><ellipse cx="7.500" cy="7.500" rx="4.300" ry="2.400" fill="#cfcfcf" stroke="#b1b1b1" stroke-width=".5"/><rect x=".7" y="11.500" width="13.600" height="3.500" fill="#b5b5b5" stroke="#8d8d8d" stroke-width=".6"/><path d="M2 13.300h8" stroke="#777" stroke-width="1.400" stroke-dasharray=".8 .7"/><rect x="11.600" y="12.600" width="1.500" height="1.300" fill="#e4dc3c"/></svg><span id="dl3" style="left:38.0px;top:66px">data</span>
  <svg style="left:5px;top:86px" width="15" height="16" viewBox="0 0 15 16"><defs><linearGradient id="dg4" x1="0" y1="0" x2="0" y2="1"><stop offset="0" stop-color="#f7b04a"/><stop offset="1" stop-color="#ee8f1e"/></linearGradient></defs><path d="M2.200 1h10.600l1.500 10.500V15H.7v-3.500z" fill="url(#dg4)" stroke="#b26a12" stroke-width=".8"/><rect x=".7" y="11.800" width="13.600" height="3.200" fill="#d9d9d9" stroke="#9a9a9a" stroke-width=".6"/><path d="M7.500 3v7M7.500 8.500 5 6.800V5.500M7.500 7.500l2.500-1.500V4.800" stroke="#fff" stroke-width=".9" fill="none"/><path d="M7.500 1.600 8.700 3.600H6.300z" fill="#fff"/><circle cx="7.500" cy="10" r=".9" fill="#fff"/><circle cx="5" cy="5.200" r=".8" fill="#fff"/><rect x="9.300" y="3.700" width="1.400" height="1.400" fill="#fff"/></svg><span id="dl4" style="left:21.5px;top:87px">1 TB Seagate FreeAgent…</span>
  <svg style="left:21px;top:107px" width="15" height="16" viewBox="0 0 15 16"><defs><linearGradient id="dg5" x1="0" y1="0" x2="0" y2="1"><stop offset="0" stop-color="#f7b04a"/><stop offset="1" stop-color="#ee8f1e"/></linearGradient></defs><path d="M2.200 1h10.600l1.500 10.500V15H.7v-3.500z" fill="url(#dg5)" stroke="#b26a12" stroke-width=".8"/><rect x=".7" y="11.800" width="13.600" height="3.200" fill="#d9d9d9" stroke="#9a9a9a" stroke-width=".6"/><path d="M7.500 3v7M7.500 8.500 5 6.800V5.500M7.500 7.500l2.500-1.500V4.800" stroke="#fff" stroke-width=".9" fill="none"/><path d="M7.500 1.600 8.700 3.600H6.300z" fill="#fff"/><circle cx="7.500" cy="10" r=".9" fill="#fff"/><circle cx="5" cy="5.200" r=".8" fill="#fff"/><rect x="9.300" y="3.700" width="1.400" height="1.400" fill="#fff"/></svg><span id="dl5" style="left:38.0px;top:108px">FreeAgent GoFlex Drive</span>
 </div>
 <div id="dpane"><span class="t" id="seltxt" style="left:155px;top:148px;font-size:12.5px;line-height:15px;color:#1c1c1c">Select a disk, volume, or image</span></div>
 <svg class="abs" style="left:202px;top:317px" width="5" height="6" viewBox="0 0 5 6"><path d="M.8 4.500 2.500 1.500 4.200 4.500" fill="none" stroke="#8a8a8a" stroke-width="1"/></svg>
</div>
<svg id="dock" class="abs" style="left:0;top:700px;z-index:40" width="1280" height="100" viewBox="0 700 1280 100">
<defs>
 <linearGradient id="shx" x1="0" y1="0" x2="1280" y2="0" gradientUnits="userSpaceOnUse">
  <stop offset="0" stop-color="#a1a9b0"/><stop offset=".3675" stop-color="#a1a9b0"/><stop offset=".3685" stop-color="#d8d8d8"/><stop offset=".9455" stop-color="#d8d8d8"/><stop offset=".9465" stop-color="#a1a9b0"/><stop offset="1" stop-color="#a1a9b0"/>
 </linearGradient>
 <linearGradient id="shy" x1="0" y1="755" x2="0" y2="789" gradientUnits="userSpaceOnUse"><stop offset="0" stop-color="#fff" stop-opacity=".25"/><stop offset=".5" stop-color="#fff" stop-opacity=".05"/><stop offset="1" stop-color="#000" stop-opacity=".03"/></linearGradient>
 <clipPath id="shc"><path d="M48 755H1231L1258 797H23z"/></clipPath>
 <radialGradient id="glow" cx=".5" cy=".5" r=".5"><stop offset="0" stop-color="#fff"/><stop offset=".35" stop-color="#d8ecff"/><stop offset=".6" stop-color="#7db6f5" stop-opacity=".7"/><stop offset="1" stop-color="#5a9be8" stop-opacity="0"/></radialGradient>
</defs>
<!-- shelf -->
<path d="M48 755H1231L1258 797H23z" fill="url(#shx)"/>
<g clip-path="url(#shc)">
 <path d="M0 755H471V772H0zM1211 755H1280V772H1211z" fill="#fff" fill-opacity=".07"/>
 <path d="M0 772H471V789H0zM1211 772H1280V789H1211z" fill="#000" fill-opacity=".06"/>
 <path d="M0 789H471V797H0zM1211 789H1280V797H1211z" fill="#000" fill-opacity=".17"/>
 <path d="M471 755H1211V789H471z" fill="url(#shy)"/>
 <path d="M471 789H1211V797H471z" fill="#000" fill-opacity=".1"/>
</g>
<!-- reflections -->
<g clip-path="url(#shc)" opacity=".2">
 <use href="#icFinder" transform="matrix(1 0 0 -1 0 1563)"/>
 <use href="#icLaunch" transform="matrix(1 0 0 -1 0 1563)"/>
 <use href="#icMC" transform="matrix(1 0 0 -1 0 1563)"/>
 <use href="#icAS" transform="matrix(1 0 0 -1 0 1563)"/>
 <use href="#icMail" transform="matrix(1 0 0 -1 0 1563)"/>
 <use href="#icSafari" transform="matrix(1 0 0 -1 0 1563)"/>
 <use href="#icFT" transform="matrix(1 0 0 -1 0 1563)"/>
 <use href="#icAB" transform="matrix(1 0 0 -1 0 1563)"/>
 <use href="#icCal" transform="matrix(1 0 0 -1 0 1563)"/>
 <use href="#icIT" transform="matrix(1 0 0 -1 0 1563)"/>
 <use href="#icPB" transform="matrix(1 0 0 -1 0 1563)"/>
 <use href="#icSP" transform="matrix(1 0 0 -1 0 1563)"/>
 <use href="#icTerm" transform="matrix(1 0 0 -1 0 1563)"/>
 <use href="#icChrome" transform="matrix(1 0 0 -1 0 1563)"/>
 <use href="#icDU" transform="matrix(1 0 0 -1 0 1563)"/>
 <use href="#icDocs" transform="matrix(1 0 0 -1 0 1563)"/>
 <use href="#icDown" transform="matrix(1 0 0 -1 0 1563)"/>
 <use href="#icMinS" transform="matrix(1 0 0 -1 0 1563)"/>
 <use href="#icMinC" transform="matrix(1 0 0 -1 0 1563)"/>
 <use href="#icTrash" transform="matrix(1 0 0 -1 0 1563)"/>
</g>
<path d="M48 755.500H1231" stroke="#fff" stroke-opacity=".35"/>
<path d="M23 797.500H1258" stroke="#3f4347"/>
<path d="M22 798H1259V800H22z" fill="#dcdcdc"/>
<defs>
 <linearGradient id="fnL" x1="0" y1="0" x2="0" y2="1"><stop offset="0" stop-color="#8fb9f2"/><stop offset=".25" stop-color="#6a9ee8"/><stop offset="1" stop-color="#3e72c8"/></linearGradient>
 <linearGradient id="fnR" x1="0" y1="0" x2="0" y2="1"><stop offset="0" stop-color="#f4f7fd"/><stop offset="1" stop-color="#c9d3ea"/></linearGradient>
 <linearGradient id="lpG" x1="0" y1="0" x2="1" y2="0"><stop offset="0" stop-color="#8e8e8e"/><stop offset=".3" stop-color="#e2e2e2"/><stop offset=".5" stop-color="#bdbdbd"/><stop offset=".75" stop-color="#ececec"/><stop offset="1" stop-color="#9a9a9a"/></linearGradient>
 <radialGradient id="asG" cx=".5" cy=".8" r=".75"><stop offset="0" stop-color="#3aa2ff"/><stop offset=".45" stop-color="#1469e6"/><stop offset="1" stop-color="#06309a"/></radialGradient>
 <linearGradient id="mlG" x1="0" y1="0" x2="0" y2="1"><stop offset="0" stop-color="#9bb6ec"/><stop offset=".5" stop-color="#7fa2e6"/><stop offset="1" stop-color="#5b88de"/></linearGradient>
 <linearGradient id="sfR" x1="0" y1="0" x2="0" y2="1"><stop offset="0" stop-color="#f4f4f4"/><stop offset=".5" stop-color="#a4a4a4"/><stop offset="1" stop-color="#dcdcdc"/></linearGradient>
 <linearGradient id="sfF" x1="0" y1="0" x2="0" y2="1"><stop offset="0" stop-color="#3f86d6"/><stop offset=".5" stop-color="#5fb6ea"/><stop offset="1" stop-color="#9fe0f6"/></linearGradient>
 <linearGradient id="ftG" x1="0" y1="0" x2="0" y2="1"><stop offset="0" stop-color="#e4e4e4"/><stop offset="1" stop-color="#a9a9a9"/></linearGradient>
 <radialGradient id="ftL" cx=".45" cy=".4" r=".6"><stop offset="0" stop-color="#4f8fd0"/><stop offset=".6" stop-color="#1d4f94"/><stop offset="1" stop-color="#0a2450"/></radialGradient>
</defs>
<!-- Finder -->
<g id="icFinder">
 <path d="M59.500 735H82V772.500H59.500z" fill="url(#fnL)"/><path d="M82 735H104V772.500H82z" fill="url(#fnR)"/>
 <path d="M59.500 772.500H104" stroke="#2e4f8a" stroke-opacity=".5"/>
 <path d="M59.500 735H104V746C90 750 72 750 59.500 746z" fill="#fff" fill-opacity=".22"/>
 <path d="M84.500 729.500C80 738 77.500 746 77.300 756.500H83.800C83.200 764 84.800 771 87.500 778" fill="none" stroke="#111" stroke-width="1.500" stroke-linecap="round"/>
 <path d="M84 735H104V772.500H86C84.300 766 83.600 762 83.800 756.500H77.300C77.600 748 80 741 84 735z" fill="url(#fnR)"/>
 <path d="M84.500 729.500C80 738 77.500 746 77.300 756.500H83.800C83.200 764 84.800 771 87.500 778" fill="none" stroke="#111" stroke-width="1.500" stroke-linecap="round"/>
 <path d="M66.500 761.500C75 767.500 88 767.500 97 761.500" fill="none" stroke="#111" stroke-width="1.500" stroke-linecap="round"/>
 <path d="M71 742V747M90.500 742V747" stroke="#111" stroke-width="1.600" stroke-linecap="round"/>
</g>
<!-- Launchpad -->
<g id="icLaunch">
 <circle cx="140" cy="756" r="25" fill="#8a8a8a"/><circle cx="140" cy="756" r="24" fill="url(#lpG)"/>
 <circle cx="140" cy="756" r="24" fill="none" stroke="#fff" stroke-opacity=".5" stroke-width=".8"/>
 <g transform="translate(141.500 757) rotate(45) scale(1.32)" fill="#454545">
  <path d="M0-17C5.500-12 6.500-3 5 6H-5C-6.500-3-5.500-12 0-17z"/><path d="M-5 0-11 7.500-5.500 7.500zM5 0 11 7.500 5.500 7.500z"/><path d="M-2.500 7.500H2.500L1.500 12C0 14.500-1 14.500-1.500 12z"/><circle cx="0" cy="-7" r="2.300" fill="#cfcfcf"/>
 </g>
</g>
<!-- Mission Control -->
<g id="icMC">
 <rect x="171.500" y="733.700" width="51" height="44" rx="4" fill="#4b4b4e"/><rect x="171.500" y="733.700" width="51" height="44" rx="4" fill="none" stroke="#2c2c2e" stroke-width=".8"/>
 <rect x="176" y="738.500" width="21" height="13.500" fill="#e8892a"/><rect x="176" y="738.500" width="21" height="2" fill="#d9d9d9"/><rect x="176" y="746" width="21" height="3" fill="#f9d27a"/><rect x="176" y="749" width="21" height="3" fill="#8a4a16"/>
 <rect x="201" y="745.500" width="17" height="22.500" fill="#2f9a3c"/><rect x="201" y="745.500" width="17" height="2" fill="#dadada"/><ellipse cx="208.500" cy="753" rx="4.500" ry="3.500" fill="#9bd24a"/><circle cx="207" cy="751.500" r="1" fill="#d33"/><rect x="214" y="757" width="3" height="9" fill="#e6d84a"/>
 <rect x="180" y="757" width="20" height="15.500" fill="#eaf2ea"/><rect x="180" y="757" width="20" height="2" fill="#d6d6d6"/><rect x="181" y="762" width="18" height="9" fill="#3f9a58"/><rect x="186" y="764" width="9" height="6" fill="#e9a6c8"/>
 <circle cx="187" cy="750.500" r="2.200" fill="#c9d6ea"/><circle cx="209.500" cy="765.500" r="2.300" fill="#9fc3ea"/><rect x="187" y="769" width="4" height="5" fill="#7fa7dc"/>
</g>
<!-- App Store -->
<g id="icAS">
 <circle cx="255" cy="755.600" r="25" fill="#fff"/><circle cx="255" cy="755.600" r="25" fill="none" stroke="#27408a" stroke-width=".7"/>
 <circle cx="255" cy="755.600" r="22.300" fill="url(#asG)"/>
 <path d="M236 749.500C242 740 268 740 274 749.500 266 746 244 746 236 749.500z" fill="#fff" fill-opacity=".18"/>
 <path d="M240.500 753H269.500V758.500H240.500z" fill="#fff"/>
 <path d="M253.500 739.500 257.500 741.500 246.500 762.500 242 767 243.500 760.500z" fill="#fff"/>
 <path d="M252.500 740 255.500 738.800 268.500 763.500 267.500 766.800 264.800 765z" fill="#fff"/>
 <path d="M250.700 745.500 254.200 747.300" stroke="#1469e6" stroke-width=".8"/>
</g>
<!-- Mail -->
<g id="icMail">
 <g transform="rotate(-9.200 311.700 755)">
  <rect x="291.700" y="733.200" width="40" height="43.600" fill="#fdfdfd"/>
  <rect x="291.700" y="733.200" width="40" height="43.600" fill="none" stroke="#fff" stroke-width="2.200" stroke-dasharray="1.700 1.300"/>
  <rect x="291.200" y="732.700" width="41" height="44.600" fill="none" stroke="#000" stroke-opacity=".12" stroke-width=".6"/>
  <rect x="295.200" y="736.700" width="33" height="36.600" fill="url(#mlG)"/>
  <path d="M296 762C300 758 304 762 303 767 302 771 297 771 296 768z" fill="#9dbcf0" fill-opacity=".5"/>
 </g>
 <path d="M302 739.500 305.800 739 309.500 744 314 753 311 757.500 306 752 303 746z" fill="#d6d2cb"/>
 <path d="M305.800 739 309.500 744 314 753 312.500 755 308.500 747.500z" fill="#7d6044" fill-opacity=".8"/>
 <path d="M313 754 318 756 324 761.500 328 767.500 323 768 316 764 311.500 758.500z" fill="#86705a"/>
 <path d="M314 757 320 760.500 326 766.500 322.500 766.500 316.500 762.500z" fill="#5f4a36" fill-opacity=".7"/>
 <path d="M310.500 757 304 759.500 303.500 763 308 765.500 312 762z" fill="#b27d3c"/>
 <ellipse cx="313.500" cy="755.800" rx="3.400" ry="2" transform="rotate(-40 313.500 755.800)" fill="#c9a26e"/>
 <circle cx="316" cy="754.200" r="1.300" fill="#6a4a2c"/>
</g>
<!-- Safari -->
<g id="icSafari">
 <circle cx="364.200" cy="730.800" r="2" fill="none" stroke="#b9b9b9" stroke-width="1"/>
 <circle cx="369.300" cy="756.800" r="24" fill="url(#sfR)"/><circle cx="369.300" cy="756.800" r="24" fill="none" stroke="#777" stroke-opacity=".6" stroke-width=".6"/>
 <circle cx="369.300" cy="756.800" r="20.500" fill="#8a8a8a"/><circle cx="369.300" cy="756.800" r="19.300" fill="url(#sfF)"/>
 <g transform="translate(369.300 756.800)">
  <path d="M0-12 2.200-2.200 12 0 2.200 2.200 0 12-2.200 2.200-12 0-2.200-2.200z" fill="#f4fbff"/>
  <path d="M0-9 1.500-1.500 9 0 1.500 1.500 0 9-1.500 1.500-9 0-1.500-1.500z" fill="#f4fbff" transform="rotate(45)"/>
  <g transform="rotate(33)"><path d="M0-17.500 2.600 0H-2.600z" fill="#e9501e"/><path d="M0 17.500 2.600 0H-2.600z" fill="#f2f2f2"/><path d="M0 17.500 0 0H-2.600z" fill="#bdbdbd"/></g>
 </g>
</g>
<!-- FaceTime -->
<g id="icFT">
 <rect x="402" y="738.600" width="34" height="34.300" rx="5" fill="url(#ftG)"/><rect x="402" y="738.600" width="34" height="34.300" rx="5" fill="none" stroke="#8c8c8c" stroke-width=".6"/>
 <path d="M437 755.800 452.300 741V770.500z" fill="url(#ftG)" stroke="#a0a0a0" stroke-width=".5"/>
 <circle cx="419" cy="755.800" r="12.200" fill="#151515"/><circle cx="419" cy="755.800" r="8.800" fill="url(#ftL)"/><ellipse cx="416.500" cy="752" rx="4" ry="2.300" fill="#9cc6f2" fill-opacity=".45"/>
</g>
<defs>
 <linearGradient id="abG" x1="0" y1="0" x2="0" y2="1"><stop offset="0" stop-color="#dcae6c"/><stop offset="1" stop-color="#c08a48"/></linearGradient>
 <linearGradient id="calR" x1="0" y1="0" x2="0" y2="1"><stop offset="0" stop-color="#e8636a"/><stop offset="1" stop-color="#c9333c"/></linearGradient>
 <linearGradient id="itG" x1="0" y1="0" x2="0" y2="1"><stop offset="0" stop-color="#1a4fae"/><stop offset=".45" stop-color="#1b66d0"/><stop offset="1" stop-color="#36a6fb"/></linearGradient>
 <linearGradient id="pbR" x1="0" y1="0" x2="1" y2="0"><stop offset="0" stop-color="#c81414"/><stop offset=".12" stop-color="#f23a2a"/><stop offset=".25" stop-color="#c81414"/><stop offset=".37" stop-color="#f23a2a"/><stop offset=".5" stop-color="#c81414"/><stop offset=".62" stop-color="#f23a2a"/><stop offset=".75" stop-color="#c81414"/><stop offset=".87" stop-color="#f23a2a"/><stop offset="1" stop-color="#c81414"/></linearGradient>
 <linearGradient id="svG" x1="0" y1="0" x2="0" y2="1"><stop offset="0" stop-color="#ececec"/><stop offset="1" stop-color="#b4b4b4"/></linearGradient>
 <linearGradient id="tmG" x1="0" y1="0" x2="1" y2="1"><stop offset="0" stop-color="#3a3a3a"/><stop offset=".5" stop-color="#1d1d1d"/><stop offset=".51" stop-color="#111"/><stop offset="1" stop-color="#171717"/></linearGradient>
</defs>
<!-- "?" badges behind contacts -->
<g id="icQ">
 <circle cx="513" cy="741.500" r="8" fill="#f6f6f6" stroke="#b8b8b8" stroke-width=".7"/>
 <text x="513" y="746.200" text-anchor="middle" font-family="'Liberation Sans',sans-serif" font-weight="bold" font-size="13" fill="#222">?</text>
 <circle cx="513" cy="762.500" r="9" fill="#e9e9e9" fill-opacity=".7" stroke="#c4c4c4" stroke-width=".7"/>
</g>
<!-- Contacts -->
<g id="icAB" transform="rotate(-5 484 756)">
 <path d="M464 735H503C505 735 506 736 506 738V772L505 777H466z" fill="#f2efe8" stroke="#8a6a44" stroke-width=".5"/>
 <path d="M461 733.500H502.500C504.500 733.500 505.500 734.500 505.500 736.500V772.500H464C462.300 772.500 461 773.800 461 775.500z" fill="url(#abG)"/>
 <path d="M461 733.500H468.500V772.500H464C462.300 772.500 461 773.800 461 775.500z" fill="#5c4640"/>
 <path d="M461 775.500C461 773.800 462.300 772.500 464 772.500H505.500V774H464.500C463 774 462.800 776.500 464.500 776.500H505V778H464C462.300 778 461 777 461 775.500z" fill="#7a5a3c"/>
 <text x="487" y="761.500" text-anchor="middle" font-family="'Liberation Sans',sans-serif" font-weight="bold" font-size="25" fill="#f3e3c4" stroke="#b98a4e" stroke-width=".35">@</text>
 <path d="M505.500 740H509V748H505.500zM505.500 750H509V758H505.500zM505.500 760H509V768H505.500z" fill="#e6e6e6" stroke="#aaa" stroke-width=".4"/>
</g>
<!-- Calendar -->
<g id="icCal" transform="rotate(-6 541 756)">
 <path d="M520 776 563 776 565 780 518 780z" fill="#8f8f8f"/>
 <rect x="519" y="736" width="45" height="40" rx="1.500" fill="#fbfbfb" stroke="#9b9b9b" stroke-width=".7"/>
 <path d="M519 737.500C519 736.700 519.700 736 520.500 736H562.500C563.300 736 564 736.700 564 737.500V748H519z" fill="url(#calR)"/>
 <text x="527.500" y="746.300" text-anchor="middle" font-family="'Liberation Sans',sans-serif" font-weight="bold" font-size="6.500" fill="#fff">AUG</text>
 <text x="541.500" y="771.500" text-anchor="middle" font-family="'Liberation Sans',sans-serif" font-weight="bold" font-size="25" letter-spacing="-1" fill="#1c1c1c">22</text>
 <path d="M519 773.500H564M519 775H564" stroke="#c8c8c8" stroke-width=".6"/>
 <path d="M529 731V739M553 731V739" stroke="#6c6c6c" stroke-width="2" stroke-linecap="round"/>
 <path d="M529 731V736M553 731V736" stroke="#c9c9c9" stroke-width=".8" stroke-linecap="round"/>
</g>
<!-- iTunes -->
<g id="icIT">
 <circle cx="598.700" cy="755.200" r="24.600" fill="#fdfdfd"/><circle cx="598.700" cy="755.200" r="24.600" fill="none" stroke="#9aa6b8" stroke-width=".6"/>
 <circle cx="598.700" cy="755.200" r="22.600" fill="url(#itG)"/>
 <path d="M578.500 748C583 734 614 734 619 748 610 744 588 744 578.500 748z" fill="#fff" fill-opacity=".16"/>
 <path d="M591.500 743.500 609.500 739.500V762.500C609.500 766 606.500 768 603.500 768 600.500 768 599 766 599.500 764 600 761.500 603 760 606.500 761V749L594.500 751.500V765.500C594.500 769 591.500 771 588.500 771 585.500 771 584 769 584.500 767 585 764.500 588 763 591.500 764z" fill="#262838"/>
 <path d="M594.500 751.500 606.500 749V760.500C603 760 600 761.500 599.500 764L594.500 765.500z" fill="#4fc0ff" fill-opacity=".55"/>
</g>
<!-- Photo Booth -->
<g id="icPB">
 <rect x="631" y="728.300" width="40.800" height="52.700" fill="#f4f4f4" stroke="#9a9a9a" stroke-width=".7"/>
 <rect x="631" y="728.300" width="40.800" height="5.500" fill="url(#svG)" stroke="#8e8e8e" stroke-width=".5"/>
 <rect x="633" y="734" width="35.500" height="32" fill="url(#pbR)"/>
 <path d="M633 734H668.500V737H633z" fill="#8e1010" fill-opacity=".6"/>
 <path d="M643.500 766H652.500V768.500H643.500z" fill="#7a4a2a"/><path d="M644.500 768 641 779M651.500 768 655 779M646.500 768.500 645.500 777M649.500 768.500 650.500 777" stroke="#6e3f22" stroke-width="1.300"/>
 <g transform="rotate(16 670 761)">
  <rect x="662" y="744" width="15" height="35.500" fill="#fbfbfb" stroke="#b0b0b0" stroke-width=".5"/>
  <rect x="663.500" y="745.500" width="12" height="10" fill="#a81c1c"/><rect x="663.500" y="756.700" width="12" height="10" fill="#a81c1c"/><rect x="663.500" y="768" width="12" height="10" fill="#a81c1c"/>
  <ellipse cx="669.500" cy="750.500" rx="4.600" ry="4.800" fill="#1a1412"/><ellipse cx="669.500" cy="761.700" rx="4.600" ry="4.800" fill="#1a1412"/><ellipse cx="669.500" cy="773" rx="4.600" ry="4.800" fill="#1a1412"/>
  <ellipse cx="669.500" cy="751.200" rx="2.900" ry="3.500" fill="#d9a48a"/><ellipse cx="669.500" cy="762.400" rx="2.900" ry="3.500" fill="#d9a48a"/><ellipse cx="669.500" cy="773.700" rx="2.900" ry="3.500" fill="#d9a48a"/>
 </g>
</g>
<!-- System Preferences -->
<g id="icSP">
 <rect x="688.700" y="734" width="49.300" height="43" fill="url(#svG)" stroke="#8f8f8f" stroke-width=".7"/>
 <rect x="692" y="737.300" width="42.700" height="36.400" fill="#6f6f6f" stroke="#555" stroke-width=".6"/>
 <clipPath id="spc"><rect x="692" y="737.300" width="42.700" height="36.400"/></clipPath>
 <g clip-path="url(#spc)">
  <circle cx="712" cy="756" r="14.500" fill="none" stroke="#d4d4d4" stroke-width="5" stroke-dasharray="3.200 2.500"/>
  <circle cx="712" cy="756" r="12.500" fill="none" stroke="#cfcfcf" stroke-width="4.500"/>
  <path d="M712 756 712 743M712 756 723.500 762.500M712 756 700.500 762.500" stroke="#c9c9c9" stroke-width="4"/>
  <circle cx="712" cy="756" r="4.200" fill="#e2e2e2" stroke="#8a8a8a" stroke-width=".6"/><circle cx="712" cy="756" r="1.600" fill="#7a7a7a"/>
  <circle cx="732" cy="775" r="9" fill="none" stroke="#d0d0d0" stroke-width="4" stroke-dasharray="2.800 2.200"/><circle cx="732" cy="775" r="7" fill="#bdbdbd"/>
  <circle cx="694" cy="775" r="8" fill="none" stroke="#d0d0d0" stroke-width="4" stroke-dasharray="2.800 2.200"/><circle cx="694" cy="775" r="6" fill="#bdbdbd"/>
 </g>
</g>
<!-- Terminal -->
<g id="icTerm">
 <rect x="745.600" y="734.700" width="49.900" height="42.400" fill="url(#svG)" stroke="#8a8a8a" stroke-width=".7"/>
 <rect x="749.300" y="738.200" width="42.600" height="35.300" fill="url(#tmG)" stroke="#4a4a4a" stroke-width=".6"/>
 <text x="751.500" y="750.500" font-family="'DejaVu Sans Mono','Liberation Mono',monospace" font-weight="bold" font-size="11" fill="#f2f2f2">&gt;_</text>
</g>
<!-- Chrome -->
<g id="icChrome" transform="translate(828.800 755.800)">
 <circle r="24.300" fill="#f4c20d"/>
 <path d="M0 0 -21.044 -12.150A24.300 24.300 0 0 1 21.044 -12.150z" fill="#db3a2c"/>
 <path d="M0 0 21.044 -12.150A24.300 24.300 0 0 1 0 24.300z" fill="#f7cb2e"/>
 <path d="M0 0 0 24.300A24.300 24.300 0 0 1 -21.044 -12.150z" fill="#4cb85e"/>
 <path d="M-21.044 -12.150A24.300 24.300 0 0 1 21.044 -12.150L0 -12.150z" fill="#db3a2c"/>
 <path d="M21.044 -12.150H0L9.700 5.600 -1.500 24.250A24.300 24.300 0 0 0 21.044 -12.150z" fill="#f7cb2e"/>
 <path d="M-21.044 -12.150 -9.700 5.600H9.700L-1.500 24.250A24.300 24.300 0 0 1 -21.044 -12.150z" fill="#4cb85e"/>
 <circle r="11.200" fill="#f4f4f4"/><circle r="9" fill="#3f8fd6"/><path d="M-8 -4A9 9 0 0 1 8 -4C4-6-4-6-8-4z" fill="#7db8ec" fill-opacity=".6"/>
</g>
<defs>
 <linearGradient id="hdT" x1="0" y1="0" x2="0" y2="1"><stop offset="0" stop-color="#dedede"/><stop offset="1" stop-color="#b9b9b9"/></linearGradient>
 <linearGradient id="trG" x1="0" y1="0" x2="1" y2="0"><stop offset="0" stop-color="#7a7a7a"/><stop offset=".25" stop-color="#d0d0d0"/><stop offset=".5" stop-color="#9a9a9a"/><stop offset=".8" stop-color="#c2c2c2"/><stop offset="1" stop-color="#707070"/></linearGradient>
 <pattern id="mesh" width="2.400" height="2.400" patternUnits="userSpaceOnUse" patternTransform="rotate(45)"><rect width="2.400" height="2.400" fill="#d8d8d8" fill-opacity=".0"/><path d="M0 0H2.400M0 0V2.400" stroke="#1c1c1c" stroke-width=".95"/></pattern>
 <filter id="blur2" x="-20%" y="-20%" width="140%" height="140%"><feGaussianBlur stdDeviation="2"/></filter>
</defs>
<!-- Disk Utility -->
<g id="icDU">
 <path d="M863.500 741H896L899 770V780.400H859.800V770z" fill="url(#hdT)" stroke="#7e7e7e" stroke-width=".7"/>
 <path d="M859.800 770H899V780.400H859.800z" fill="#8e8e8e" stroke="#6a6a6a" stroke-width=".6"/>
 <rect x="877" y="772.500" width="10" height="5.500" fill="#4a4a4a"/><rect x="892.500" y="774.500" width="2" height="1.800" fill="#e6d83a"/>
 <rect x="868" y="743.500" width="21" height="3.500" fill="#2a2a2a"/>
 <ellipse cx="879.500" cy="760" rx="16" ry="9" fill="none" stroke="#a2a2a2" stroke-width=".8"/>
 <path d="M871 741C869 736 872 732.500 877 733.500 882 734.500 884 738 884 741M876 748C872 748 872 753 876 753" fill="none" stroke="#1e1e1e" stroke-width="1.800"/>
 <ellipse cx="879" cy="757" rx="8.300" ry="5.300" fill="#8a8a8a"/><ellipse cx="879" cy="756" rx="8" ry="5" fill="#e4e4e4" stroke="#777" stroke-width=".6"/><ellipse cx="879" cy="751.500" rx="4.300" ry="2.600" fill="#f2f2f2" stroke="#2a2a2a" stroke-width="1.400"/>
 <path d="M893.500 729.500C888 729 887 734 888.500 741L892 760C893 765 897.500 765.500 899.500 762M904.500 729.500C910 729 912 734 911 742 910 752 906 760 902 764 900.500 765.500 898.500 764 897.500 761" fill="none" stroke="#2a2a2a" stroke-width="1.600"/>
 <path d="M888.500 744C889 752 898 756 909 748" fill="none" stroke="#8a8a8a" stroke-width="1"/>
 <circle cx="894.500" cy="729.500" r="1.500" fill="#222"/><circle cx="903.500" cy="729.500" r="1.500" fill="#222"/>
</g>
<!-- separator -->
<g fill="#fff" fill-opacity=".55">
 <path d="M925.500 757.500H934.500V759.500H925.500zM925.300 762H934.700V764.200H925.300zM925 766.800H935V769.200H925zM924.800 771.800H935.200V774.400H924.800zM924.500 777H935.500V779.800H924.500zM924.200 782.500H935.800V785.500H924.200zM924 788.200H936V791.500H924z"/>
</g>
<!-- Documents stack -->
<g id="icDocs">
 <path d="M953 733H980L991 744V782H953z" fill="#000" fill-opacity=".28" filter="url(#blur2)"/>
 <path d="M953.900 735.800H978L989 746.800V781H953.900z" fill="#fbfbfb" stroke="#cfcfcf" stroke-width=".5"/>
 <path d="M978 735.800C979.500 740 979 744 978 746.800H989z" fill="#e9e9e9" stroke="#c6c6c6" stroke-width=".5"/>
 <path d="M958.500 739.500H964L966 741.500V748.500H958.500z" fill="#f3f0e2" stroke="#b5a45a" stroke-width=".8"/>
 <path d="M957.500 752H969" stroke="#444" stroke-width="1"/>
 <path d="M957.500 755.500H967M957.500 757.500H968M957.500 760H966M957.500 764H968M957.500 766H967M957.500 768H968M972.500 755H985M972.500 757H984M972.500 759.500H985M972.500 761.500H983M972.500 774H985M972.500 776H984" stroke="#c9c9c9" stroke-width=".7"/>
 <rect x="966.500" y="755" width="4" height="4.500" fill="#d9cfc4"/><rect x="975.500" y="764" width="6.500" height="8" fill="#5a5a66"/>
 <rect x="958" y="772.500" width="3.500" height="3" fill="#8eb6e0"/><rect x="963" y="772.500" width="3.500" height="3" fill="#8eb6e0"/>
</g>
<!-- Downloads stack -->
<g id="icDown">
 <path d="M1011 732H1040L1049 741V782H1011z" fill="#000" fill-opacity=".25" filter="url(#blur2)"/>
 <path d="M1008 743.500C1008 742.400 1008.900 741.500 1010 741.500H1049C1050.100 741.500 1051 742.400 1051 743.500V768C1051 769.100 1050.100 770 1049 770H1010C1008.900 770 1008 769.100 1008 768z" fill="#8db4d8" stroke="#6b95be" stroke-width=".6"/>
 <path d="M1017 729.500H1034L1041 736.500V760H1017z" fill="#fafafa" stroke="#cdcdcd" stroke-width=".5"/>
 <circle cx="1024.500" cy="733.500" r="3.600" fill="#3cb648"/><path d="M1024.500 731 1027 734H1022z" fill="#fff"/>
 <path d="M1012.700 735.400H1037L1047 745.400V780H1012.700z" fill="#fcfcfc" stroke="#cfcfcf" stroke-width=".5"/>
 <path d="M1037 735.400C1038.300 739.500 1038 743 1037 745.400H1047z" fill="#e9e9e9" stroke="#c6c6c6" stroke-width=".5"/>
 <path d="M1021.500 751H1036.500L1039 767V773.300H1019V767z" fill="#b2b2b2" stroke="#7c7c7c" stroke-width=".6"/>
 <rect x="1019" y="767" width="20" height="6.300" fill="#8a8a8a"/><rect x="1025" y="768.500" width="8" height="3.200" fill="#5a5a5a"/><rect x="1024" y="752.500" width="10" height="1.800" fill="#333"/><ellipse cx="1029" cy="760.500" rx="6" ry="3.200" fill="#a2a2a2" stroke="#8a8a8a" stroke-width=".5"/>
</g>
<!-- minimized safari window -->
<g id="icMinS">
 <rect x="1060" y="738" width="54" height="36" fill="#000" fill-opacity=".3" filter="url(#blur2)"/>
 <rect x="1060.600" y="738.500" width="52.200" height="34.300" fill="#fdfdfd"/>
 <rect x="1060.600" y="738.500" width="52.200" height="2.800" fill="#d9d9d9"/>
 <rect x="1063" y="746" width="4.500" height="5.500" fill="#4a3a5a"/><rect x="1063" y="758" width="4.500" height="4.500" fill="#9a8a6a"/><rect x="1063" y="751.800" width="4.500" height="1.500" fill="#8ec0ee"/><rect x="1063" y="764" width="4.500" height="1.500" fill="#8ec0ee"/>
 <path d="M1069.500 746.500H1082M1069.500 751H1088M1069.500 753H1084M1069.500 759H1089M1069.500 764.500H1080M1069.500 766.500H1083M1069.500 770H1079" stroke="#9a9a9a" stroke-width=".8"/>
 <rect x="1097" y="742" width="15" height="2.500" fill="#3a6ab0"/><rect x="1097" y="746.500" width="15" height="6" fill="#5a4a4a"/><rect x="1097" y="754" width="15" height="1.500" fill="#8ec0ee"/><rect x="1097" y="757" width="15" height="5" fill="#cfd6de"/><rect x="1097" y="764" width="15" height="5" fill="#b9c6d6"/>
 <circle cx="1103" cy="772" r="9" fill="url(#sfR)" stroke="#777" stroke-width=".4"/><circle cx="1103" cy="772" r="7" fill="url(#sfF)"/>
 <g transform="translate(1103 772) rotate(33)"><path d="M0-6.500 1.200 0H-1.200z" fill="#e9501e"/><path d="M0 6.500 1.200 0H-1.200z" fill="#f2f2f2"/></g>
</g>
<!-- minimized chrome window -->
<g id="icMinC">
 <rect x="1118" y="739" width="54" height="34" fill="#000" fill-opacity=".3" filter="url(#blur2)"/>
 <rect x="1118.800" y="739.800" width="52" height="31.900" fill="#fdfdfd"/>
 <rect x="1118.800" y="739.800" width="52" height="1.800" fill="#d2d2d2"/><rect x="1118.800" y="741.600" width="52" height="1.600" fill="#2c2c2c"/>
 <rect x="1120" y="744.500" width="5" height="2.300" fill="#2a2a2a"/><rect x="1154" y="744.500" width="4" height="2.300" fill="#3b7ded"/><rect x="1164" y="744.500" width="5" height="2.300" fill="#d9463c"/>
 <path d="M1125 752.500H1143M1125 757H1139M1125 761H1142M1125 768H1140" stroke="#3a3ac8" stroke-width=".9"/>
 <path d="M1125 754.500H1146M1125 759H1140M1130 763.500H1144M1130 765.500H1142" stroke="#9a9a9a" stroke-width=".7"/>
 <rect x="1125" y="762.500" width="4.500" height="3.500" fill="#5a3a8a"/>
 <rect x="1156" y="751.500" width="12.500" height="6.500" fill="#f6e6a6" stroke="#e0c870" stroke-width=".4"/>
 <g transform="translate(1161 772) scale(.375)">
  <circle r="24.300" fill="#f4c20d"/>
  <path d="M-21.044 -12.150A24.300 24.300 0 0 1 21.044 -12.150L0 -12.150z" fill="#db3a2c"/>
  <path d="M21.044 -12.150H0L9.700 5.600 -1.500 24.250A24.300 24.300 0 0 0 21.044 -12.150z" fill="#f7cb2e"/>
  <path d="M-21.044 -12.150 -9.700 5.600H9.700L-1.500 24.250A24.300 24.300 0 0 1 -21.044 -12.150z" fill="#4cb85e"/>
  <circle r="11.200" fill="#f4f4f4"/><circle r="9" fill="#3f8fd6"/>
 </g>
</g>
<!-- Trash -->
<g id="icTrash">
 <path d="M1182.500 737 1187.500 778C1192 782 1212 782 1216.500 778L1221.500 737z" fill="url(#trG)"/>
 <path d="M1182.500 737 1187.500 778C1192 782 1212 782 1216.500 778L1221.500 737z" fill="url(#mesh)"/>
 <ellipse cx="1202" cy="737" rx="19.500" ry="4.600" fill="#6a6a6a"/><ellipse cx="1202" cy="737" rx="19.500" ry="4.600" fill="url(#mesh)"/>
 <ellipse cx="1202" cy="737" rx="19.500" ry="4.600" fill="none" stroke="#dcdcdc" stroke-width="1.500"/>
 <path d="M1187.300 776.500C1192 781.500 1212 781.500 1216.700 776.500" fill="none" stroke="#d6d6d6" stroke-width="2"/>
 <path d="M1186.500 769C1192 773.500 1212 773.500 1217.500 769" fill="none" stroke="#bdbdbd" stroke-width=".8"/>
</g>
<!-- indicator lights -->
<g>
 <ellipse cx="81" cy="791.600" rx="7" ry="4" fill="url(#glow)"/><ellipse cx="369.500" cy="791.600" rx="7" ry="4" fill="url(#glow)"/><ellipse cx="598.500" cy="791.600" rx="7" ry="4" fill="url(#glow)"/>
 <ellipse cx="769.800" cy="791.600" rx="7" ry="4" fill="url(#glow)"/><ellipse cx="828" cy="791.600" rx="7" ry="4" fill="url(#glow)"/><ellipse cx="885" cy="791.600" rx="7" ry="4" fill="url(#glow)"/>
 <g fill="#fff"><ellipse cx="81" cy="799.500" rx="4" ry="1.200"/><ellipse cx="369.500" cy="799.500" rx="4" ry="1.200"/><ellipse cx="598.500" cy="799.500" rx="4" ry="1.200"/><ellipse cx="769.800" cy="799.500" rx="4" ry="1.200"/><ellipse cx="828" cy="799.500" rx="4" ry="1.200"/><ellipse cx="885" cy="799.500" rx="4" ry="1.200"/></g>
</g>
</svg>
</body>
</html>
